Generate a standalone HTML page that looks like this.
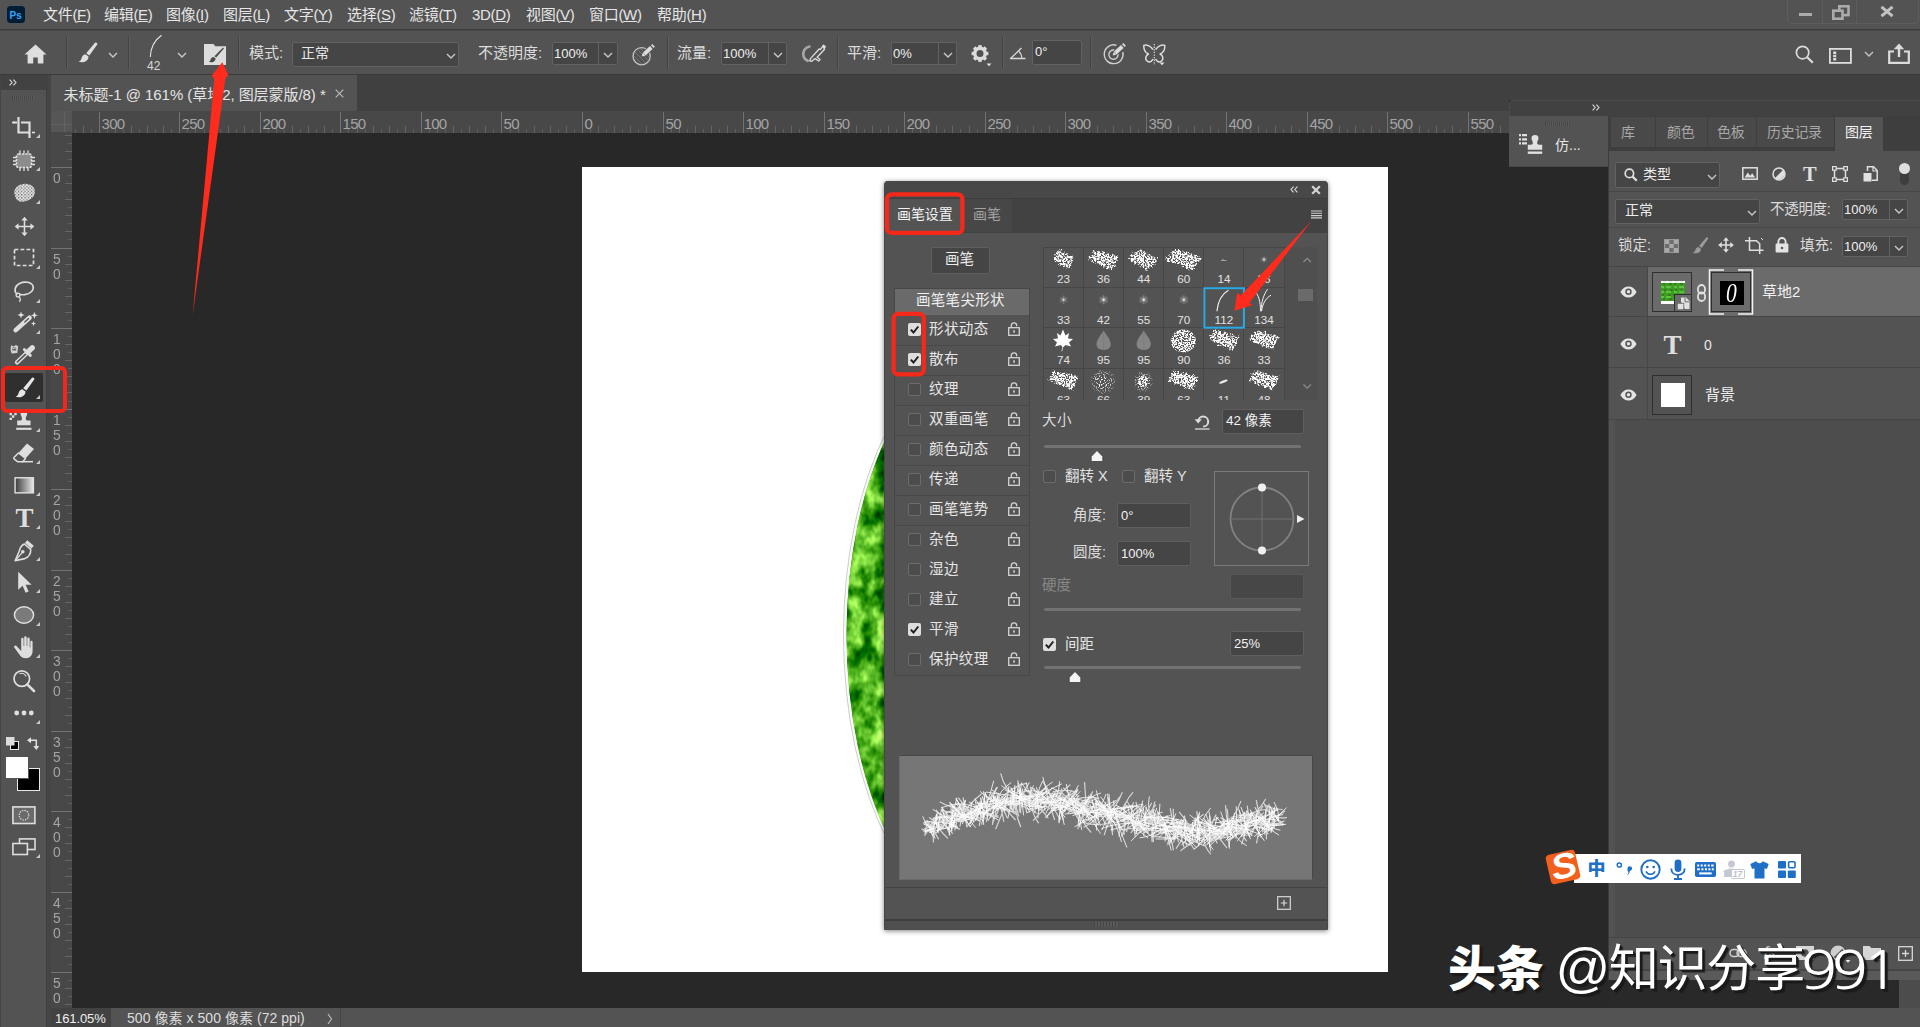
<!DOCTYPE html>
<html lang="zh-CN">
<head>
<meta charset="utf-8">
<title>Photoshop - 画笔设置</title>
<style>
*{box-sizing:border-box;margin:0;padding:0}
html,body{width:1920px;height:1027px;overflow:hidden;background:#282828}
body{font-family:"Liberation Sans","Noto Sans CJK SC",sans-serif;color:#dcdcdc;font-size:14px;position:relative}
.abs{position:absolute}
#app{position:absolute;left:0;top:0;width:1920px;height:1027px;overflow:hidden;background:#282828}
.t{position:absolute;white-space:nowrap;line-height:1}
svg{position:absolute;overflow:visible}
/* menu */
#menubar{left:0;top:0;width:1920px;height:30px;background:#535353;border-bottom:1px solid #3c3c3c}
#menubar .t{top:7px;font-size:15px;color:#e6e6e6;letter-spacing:-0.3px}
/* options bar */
#optbar{left:0;top:30px;width:1920px;height:45px;background:#535353;border-bottom:1px solid #3a3a3a;border-top:1px solid #474747}
.inp{position:absolute;background:#454545;border:1px solid #626262;border-radius:2px}
.lbl{font-size:14px;color:#dcdcdc}
.sep{width:2px;height:32px;background:linear-gradient(90deg,#434343 0 1px,#5f5f5f 1px 2px)}
.ptab{top:117px;height:30px;background:#494949}
.ptx{top:125px;font-size:14px;color:#a8a8a8;letter-spacing:-0.3px}
.hsep{left:1609px;width:311px;height:1px;background:#474747}
/* tab bar */
#tabbar{left:51px;top:75px;width:1458px;height:36px;background:#404040}
#doctab{left:0;top:0;width:306px;height:36px;background:#535353}
/* toolbar */
#toolbar{left:0;top:75px;width:51px;height:952px;background:#535353;border-right:1px solid #3e3e3e}
#tbhead{left:0;top:0;width:50px;height:15px;background:#424242}
/* rulers */
#hruler{left:51px;top:111px;width:1458px;height:22px;background:#484848;overflow:hidden}
#vruler{left:51px;top:133px;width:21px;height:875px;background:#484848;overflow:hidden}
.rl{position:absolute;font-size:15px;color:#a4a4a4;line-height:1;letter-spacing:-0.7px}
/* canvas */
#canvas{left:72px;top:133px;width:1537px;height:875px;background:#282828}
#doc{left:582px;top:167px;width:806px;height:805px;background:#fff;overflow:hidden}
/* status */
#status{left:51px;top:1008px;width:1869px;height:19px;background:#535353}
</style>
</head>
<body>
<div id="app">
<!-- MENU BAR -->
<div id="menubar" class="abs">
  <svg style="left:7px;top:6px" width="18" height="17" viewBox="0 0 18 17"><rect width="18" height="17" rx="3.5" fill="#001e36"/><text x="2.6" y="12.6" font-family="Liberation Sans, sans-serif" font-weight="bold" font-size="10" fill="#31a8ff">Ps</text></svg>
  <span class="t" style="left:43px">文件(<u>F</u>)</span>
  <span class="t" style="left:104px">编辑(<u>E</u>)</span>
  <span class="t" style="left:166px">图像(<u>I</u>)</span>
  <span class="t" style="left:223px">图层(<u>L</u>)</span>
  <span class="t" style="left:284px">文字(<u>Y</u>)</span>
  <span class="t" style="left:347px">选择(<u>S</u>)</span>
  <span class="t" style="left:409px">滤镜(<u>T</u>)</span>
  <span class="t" style="left:472px">3D(<u>D</u>)</span>
  <span class="t" style="left:526px">视图(<u>V</u>)</span>
  <span class="t" style="left:589px">窗口(<u>W</u>)</span>
  <span class="t" style="left:657px">帮助(<u>H</u>)</span>
  <!-- window controls -->
  <div class="abs" style="left:1787px;top:-4px;width:132px;height:28px;border:1px solid #5d5d5d;border-radius:5px"></div>
  <div class="abs" style="left:1822px;top:0;width:1px;height:23px;background:#5d5d5d"></div>
  <div class="abs" style="left:1856px;top:0;width:1px;height:23px;background:#5d5d5d"></div>
  <div class="abs" style="left:1799px;top:13px;width:13px;height:3px;background:#ababab"></div>
  <svg style="left:1832px;top:5px" width="18" height="15" viewBox="0 0 18 15"><rect x="7.300" y="1.300" width="9.200" height="8.800" fill="none" stroke="#ababab" stroke-width="2.600"/><rect x="1.300" y="5.700" width="9.200" height="8" fill="#535353" stroke="#ababab" stroke-width="2.600"/></svg>
  <svg style="left:1880px;top:6px" width="14" height="11" viewBox="0 0 14 11"><path d="M1.5 0.8L12.5 10.2M12.5 0.8L1.5 10.2" stroke="#c2c2c2" stroke-width="3"/></svg>
</div>
<!-- OPTIONS BAR -->
<div id="optbar" class="abs">
  <!-- coordinates inside are relative to top:30 (content starts 1px lower due to border) -->
  <div class="abs" style="left:0;top:-1px;width:1920px;height:45px">
  <!-- home -->
  <svg style="left:24px;top:14px" width="23" height="20" viewBox="0 0 23 20"><path d="M11.5 0.5L0.5 10.5H3.6V19.5H9.2V13.4H13.8V19.5H19.4V10.5H22.5Z" fill="#dedede"/></svg>
  <div class="abs sep" style="left:66px;top:7px"></div>
  <!-- brush tool -->
  <svg style="left:78px;top:12px" width="20" height="21" viewBox="0 0 20 21"><path d="M17.2 0.6c1.2-.6 2.6.6 2 1.9L11.4 13.6 8.2 11.2Z" fill="#dedede"/><path d="M7.3 12.2l3.2 2.4c.2 2.6-1.4 4.6-4.2 5.3-2 .5-4.3.3-5.8-.4 2.1-.5 2.6-1.600 3.100-3.400.5-2 1.800-3.500 3.700-3.900z" fill="#dedede"/></svg>
  <svg style="left:108px;top:22px" width="10" height="6" viewBox="0 0 10 6"><path d="M1 1l4 4 4-4" fill="none" stroke="#c8c8c8" stroke-width="1.4"/></svg>
  <div class="abs sep" style="left:128px;top:7px"></div>
  <!-- brush preview arc + size -->
  <svg style="left:148px;top:4px" width="16" height="24" viewBox="0 0 16 24"><path d="M2.300 23C2.600 14 6 6.500 13.500 1.200" fill="none" stroke="#e8e8e8" stroke-width="1.100"/></svg>
  <span class="t" style="left:147px;top:30px;font-size:12px;color:#d8d8d8">42</span>
  <svg style="left:177px;top:22px" width="10" height="6" viewBox="0 0 10 6"><path d="M1 1l4 4 4-4" fill="none" stroke="#c8c8c8" stroke-width="1.4"/></svg>
  <!-- brush settings folder -->
  <svg style="left:204px;top:14px" width="22" height="21" viewBox="0 0 22 21"><path d="M0 0H9.500L11.300 2.300H22V21H0Z" fill="#dcdcdc"/><path d="M18.800 3.800c.7-.3 1.300.4.900 1L12.200 13.600l-1.800-1.400Z" fill="#4a4a4a"/><path d="M9.600 12.900l2 1.500c0 2.100-1.600 3.500-3.800 3.800-1.200.1-2.400-.1-3.200-.6 1.300-.3 1.700-1 2-2.200.4-1.400 1.400-2.400 3-2.500z" fill="#4a4a4a"/></svg>
  <div class="abs sep" style="left:238px;top:7px"></div>
  <!-- mode -->
  <span class="t lbl" style="left:249px;top:15px;font-size:15px">模式:</span>
  <div class="inp" style="left:292px;top:12px;width:167px;height:25px"></div>
  <span class="t" style="left:301px;top:16px;font-size:14px;color:#e8e8e8">正常</span>
  <svg style="left:446px;top:23px" width="10" height="6" viewBox="0 0 10 6"><path d="M1 1l4 4 4-4" fill="none" stroke="#c8c8c8" stroke-width="1.400"/></svg>
  <!-- opacity -->
  <span class="t lbl" style="left:478px;top:15px;font-size:15px">不透明度:</span>
  <div class="inp" style="left:552px;top:12px;width:66px;height:23px"></div>
  <div class="abs" style="left:598px;top:13px;width:1px;height:21px;background:#626262"></div>
  <span class="t" style="left:554px;top:17px;font-size:13px;color:#f0f0f0">100%</span>
  <svg style="left:603px;top:22px" width="10" height="6" viewBox="0 0 10 6"><path d="M1 1l4 4 4-4" fill="none" stroke="#c8c8c8" stroke-width="1.400"/></svg>
  <!-- pressure opacity -->
  <svg style="left:632px;top:13px" width="24" height="23" viewBox="0 0 24 23"><circle cx="9.600" cy="13.200" r="8.600" fill="none" stroke="#c4c4c4" stroke-width="1.300"/><path d="M3 9l10 10M2 13l8 8M5 6l12 12M8 5l10 10" stroke="#8a8a8a" stroke-width=".6"/><path d="M9.600 13.600l1.300-4 2.900 2.800z" fill="#dcdcdc"/><path d="M12.300 11L19.300 4.500" stroke="#535353" stroke-width="5.400"/><path d="M12.300 11L19.300 4.500" stroke="#dcdcdc" stroke-width="3.800"/><path d="M20.300 3.600L21.600 2.400" stroke="#dcdcdc" stroke-width="3.800"/></svg>
  <div class="abs sep" style="left:667px;top:7px"></div>
  <!-- flow -->
  <span class="t lbl" style="left:677px;top:15px;font-size:15px">流量:</span>
  <div class="inp" style="left:721px;top:12px;width:66px;height:23px"></div>
  <div class="abs" style="left:768px;top:13px;width:1px;height:21px;background:#626262"></div>
  <span class="t" style="left:723px;top:17px;font-size:13px;color:#f0f0f0">100%</span>
  <svg style="left:773px;top:22px" width="10" height="6" viewBox="0 0 10 6"><path d="M1 1l4 4 4-4" fill="none" stroke="#c8c8c8" stroke-width="1.400"/></svg>
  <!-- airbrush -->
  <svg style="left:801px;top:14px" width="26" height="19" viewBox="0 0 26 19"><path d="M8.500 2.500C3.500 3.500 1.500 8 2.500 12c.6 2.400 2.200 4 4.200 4.800" fill="none" stroke="#a8a8a8" stroke-width="2.600" stroke-linecap="round"/><path d="M22.500 1.200l1.800 1.600-1.300 1.500.6 1-7.500 8 3 2.200-1.400 1.500-3.600-2.400-3.600 2.800-1.700-.6.700-2.200 8.600-9.600 1.500.3z" fill="none" stroke="#dcdcdc" stroke-width="1.300" stroke-linejoin="round"/><path d="M22.400 1l2 1.800-1.500 1.600-2-1.800z" fill="#dcdcdc"/></svg>
  <div class="abs sep" style="left:837px;top:7px"></div>
  <!-- smoothing -->
  <span class="t lbl" style="left:847px;top:15px;font-size:15px">平滑:</span>
  <div class="inp" style="left:891px;top:12px;width:66px;height:23px"></div>
  <div class="abs" style="left:938px;top:13px;width:1px;height:21px;background:#626262"></div>
  <span class="t" style="left:893px;top:17px;font-size:13px;color:#f0f0f0">0%</span>
  <svg style="left:943px;top:22px" width="10" height="6" viewBox="0 0 10 6"><path d="M1 1l4 4 4-4" fill="none" stroke="#c8c8c8" stroke-width="1.400"/></svg>
  <!-- gear -->
  <svg style="left:971px;top:15px" width="22" height="22" viewBox="0 0 22 22"><g transform="translate(9 8.500)"><circle r="5.200" fill="none" stroke="#dcdcdc" stroke-width="3.400"/><g fill="#dcdcdc"><rect x="-1.700" y="-8.400" width="3.400" height="3.200"/><rect x="-1.700" y="5.200" width="3.400" height="3.200"/><rect x="-8.400" y="-1.700" width="3.200" height="3.400"/><rect x="5.200" y="-1.700" width="3.200" height="3.400"/><g transform="rotate(45)"><rect x="-1.700" y="-8.400" width="3.400" height="3.200"/><rect x="-1.700" y="5.200" width="3.400" height="3.200"/><rect x="-8.400" y="-1.700" width="3.200" height="3.400"/><rect x="5.200" y="-1.700" width="3.200" height="3.400"/></g></g></g><path d="M15.500 18.500h5l-2.500 2.800z" fill="#e0e0e0"/></svg>
  <div class="abs sep" style="left:1002px;top:7px"></div>
  <!-- angle -->
  <svg style="left:1009px;top:17px" width="17" height="13" viewBox="0 0 17 13"><path d="M12.500 1L1.500 11.500H16.500" fill="none" stroke="#d8d8d8" stroke-width="1.300" stroke-linejoin="round"/><path d="M10 4.500c1.800 1.600 2.800 4 2.800 7" fill="none" stroke="#d8d8d8" stroke-width="1.100"/></svg>
  <div class="inp" style="left:1032px;top:10px;width:50px;height:25px"></div>
  <span class="t" style="left:1035px;top:15px;font-size:13px;color:#f0f0f0">0°</span>
  <div class="abs sep" style="left:1090px;top:7px"></div>
  <!-- pressure size -->
  <svg style="left:1103px;top:12px" width="24" height="23" viewBox="0 0 24 23"><path d="M13.500 3.300A9.400 9.400 0 1 0 19.800 10" fill="none" stroke="#d0d0d0" stroke-width="1.400"/><path d="M11.500 8.200A4.600 4.600 0 1 0 15 12" fill="none" stroke="#d0d0d0" stroke-width="1.400"/><path d="M9.600 13.600l1.300-4 2.900 2.800z" fill="#dcdcdc"/><path d="M12.300 11L19.300 4.500" stroke="#535353" stroke-width="5.400"/><path d="M12.300 11L19.300 4.500" stroke="#dcdcdc" stroke-width="3.800"/><path d="M20.300 3.600L21.600 2.400" stroke="#dcdcdc" stroke-width="3.800"/></svg>
  <!-- symmetry butterfly -->
  <svg style="left:1142px;top:13px" width="25" height="24" viewBox="0 0 25 24"><path d="M11 6.500C8.500 3 4.500 1.200 1.800 2.400 1.500 6.500 3.500 9.800 6.500 11c-2.600 1.200-3.300 4-2.200 6.200 1.400 2.600 5 2.400 6.700-1.200" fill="none" stroke="#dcdcdc" stroke-width="1.500" stroke-linejoin="round"/><path d="M13.600 6.500C16.100 3 20.100 1.200 22.800 2.400 23.100 6.500 21.100 9.800 18.100 11c2.600 1.200 3.300 4 2.200 6.200-1.400 2.600-5 2.400-6.700-1.200" fill="none" stroke="#dcdcdc" stroke-width="1.500" stroke-linejoin="round"/><path d="M12.300 1v21" stroke="#dcdcdc" stroke-width="1.200" stroke-dasharray="1.300 1.300"/><path d="M17.500 19.500h5l-2.500 2.800z" fill="#e0e0e0"/></svg>
  <!-- right: search / workspace / share -->
  <svg style="left:1795px;top:15px" width="19" height="19" viewBox="0 0 19 19"><circle cx="7.600" cy="7.600" r="6.200" fill="none" stroke="#dcdcdc" stroke-width="1.700"/><path d="M12.200 12.200l5.600 5.600" stroke="#dcdcdc" stroke-width="2.200"/></svg>
  <svg style="left:1829px;top:18px" width="23" height="16" viewBox="0 0 23 16"><rect x=".9" y=".9" width="21" height="14" fill="none" stroke="#dcdcdc" stroke-width="1.800"/><rect x="4.200" y="3.500" width="3" height="9" fill="#dcdcdc"/><path d="M4 6.500h3.500M4 9.500h3.500" stroke="#535353" stroke-width=".8"/></svg>
  <svg style="left:1864px;top:21px" width="10" height="6" viewBox="0 0 10 6"><path d="M1 1l4 4 4-4" fill="none" stroke="#c8c8c8" stroke-width="1.300"/></svg>
  <svg style="left:1888px;top:13px" width="22" height="21" viewBox="0 0 22 21"><path d="M6 8.500H1.200V19.800H20.800V8.500H16" fill="none" stroke="#dcdcdc" stroke-width="2.200"/><path d="M11 14V3" stroke="#dcdcdc" stroke-width="2.400"/><path d="M5.800 6.200L11 .6l5.200 5.600z" fill="#dcdcdc"/></svg>
  </div>
</div>
<!-- DOCUMENT TAB BAR -->
<div id="tabbar" class="abs">
  <div id="doctab" class="abs"></div>
  <span class="t" style="left:12.500px;top:11.800px;font-size:15px;color:#e4e4e4;letter-spacing:-0.050px">未标题-1 @ 161% (草地2, 图层蒙版/8) *</span>
  <svg style="left:284px;top:14px" width="9" height="9" viewBox="0 0 9 9"><path d="M.7.7l7.600 7.600M8.300.7L.7 8.300" stroke="#bdbdbd" stroke-width="1.100"/></svg>
</div>
<!-- CANVAS -->
<div id="canvas" class="abs"></div>
<div id="doc" class="abs">
  <svg style="left:0;top:0" width="806" height="805" viewBox="0 0 806 805">
    <defs>
      <filter id="grassfx" x="0" y="0" width="100%" height="100%" color-interpolation-filters="sRGB">
        <feTurbulence type="fractalNoise" baseFrequency="0.075 0.05" numOctaves="3" seed="11" result="n"/>
        <feColorMatrix in="n" type="matrix" values="1.500 0 0 0 -0.440  1.300 0 0 0 0.040  1.000 0 0 0 -0.380  0 0 0 0 1" result="c"/>
        <feComposite in="c" in2="SourceGraphic" operator="in"/>
      </filter>
      <clipPath id="grassclip"><rect x="250" y="240" width="60" height="450"/></clipPath>
    </defs>
    <g clip-path="url(#grassclip)">
    <ellipse cx="412" cy="468" rx="147.500" ry="289" fill="#3f9c22"/>
    <ellipse cx="412" cy="468" rx="147.500" ry="289" fill="#3f9c22" filter="url(#grassfx)"/>
    <ellipse cx="412" cy="468" rx="150.500" ry="291" fill="none" stroke="#b4b4b4" stroke-width=".7"/>
    </g>
  </svg>
</div>
<!-- STATUS BAR -->
<div id="status" class="abs">
  <div class="abs" style="left:0;top:0;width:60px;height:19px;background:#424242"></div>
  <span class="t" style="left:4px;top:3.500px;font-size:13px;color:#efefef;letter-spacing:-0.100px">161.05%</span>
  <span class="t" style="left:76px;top:3px;font-size:14px;color:#dcdcdc;letter-spacing:0.05px">500 像素 x 500 像素 (72 ppi)</span>
  <svg style="left:276px;top:5px" width="6" height="12" viewBox="0 0 6 12"><path d="M1 1l3.500 5L1 11" fill="none" stroke="#c0c0c0" stroke-width="1.100"/></svg>
  <div class="abs" style="left:289px;top:0;width:1px;height:20px;background:#474747"></div>
</div>
<!-- RULERS -->
<div id="hruler" class="abs">
<div class="abs" style="left:0;top:0;width:21px;height:21px;background:#565656"></div>
<div class="abs" style="left:13px;top:0;width:1px;height:21px;background:#6a6a6a;opacity:.6"></div><div class="abs" style="left:0;top:13px;width:21px;height:1px;background:#6a6a6a;opacity:.6"></div>
<svg style="left:0;top:0" width="1458" height="22" viewBox="0 0 1458 22" shape-rendering="crispEdges"><rect x="24" y="18" width="1" height="4" fill="#5e5e5e"/><rect x="32" y="15" width="1" height="7" fill="#646464"/><rect x="40" y="18" width="1" height="4" fill="#5e5e5e"/><rect x="48" y="1" width="1" height="21" fill="#727272"/><rect x="56" y="18" width="1" height="4" fill="#5e5e5e"/><rect x="64" y="15" width="1" height="7" fill="#646464"/><rect x="72" y="18" width="1" height="4" fill="#5e5e5e"/><rect x="80" y="15" width="1" height="7" fill="#646464"/><rect x="88" y="18" width="1" height="4" fill="#5e5e5e"/><rect x="96" y="15" width="1" height="7" fill="#646464"/><rect x="104" y="18" width="1" height="4" fill="#5e5e5e"/><rect x="112" y="15" width="1" height="7" fill="#646464"/><rect x="120" y="18" width="1" height="4" fill="#5e5e5e"/><rect x="128" y="1" width="1" height="21" fill="#727272"/><rect x="136" y="18" width="1" height="4" fill="#5e5e5e"/><rect x="144" y="15" width="1" height="7" fill="#646464"/><rect x="153" y="18" width="1" height="4" fill="#5e5e5e"/><rect x="161" y="15" width="1" height="7" fill="#646464"/><rect x="169" y="18" width="1" height="4" fill="#5e5e5e"/><rect x="177" y="15" width="1" height="7" fill="#646464"/><rect x="185" y="18" width="1" height="4" fill="#5e5e5e"/><rect x="193" y="15" width="1" height="7" fill="#646464"/><rect x="201" y="18" width="1" height="4" fill="#5e5e5e"/><rect x="209" y="1" width="1" height="21" fill="#727272"/><rect x="217" y="18" width="1" height="4" fill="#5e5e5e"/><rect x="225" y="15" width="1" height="7" fill="#646464"/><rect x="233" y="18" width="1" height="4" fill="#5e5e5e"/><rect x="241" y="15" width="1" height="7" fill="#646464"/><rect x="249" y="18" width="1" height="4" fill="#5e5e5e"/><rect x="257" y="15" width="1" height="7" fill="#646464"/><rect x="265" y="18" width="1" height="4" fill="#5e5e5e"/><rect x="273" y="15" width="1" height="7" fill="#646464"/><rect x="281" y="18" width="1" height="4" fill="#5e5e5e"/><rect x="289" y="1" width="1" height="21" fill="#727272"/><rect x="297" y="18" width="1" height="4" fill="#5e5e5e"/><rect x="306" y="15" width="1" height="7" fill="#646464"/><rect x="314" y="18" width="1" height="4" fill="#5e5e5e"/><rect x="322" y="15" width="1" height="7" fill="#646464"/><rect x="330" y="18" width="1" height="4" fill="#5e5e5e"/><rect x="338" y="15" width="1" height="7" fill="#646464"/><rect x="346" y="18" width="1" height="4" fill="#5e5e5e"/><rect x="354" y="15" width="1" height="7" fill="#646464"/><rect x="362" y="18" width="1" height="4" fill="#5e5e5e"/><rect x="370" y="1" width="1" height="21" fill="#727272"/><rect x="378" y="18" width="1" height="4" fill="#5e5e5e"/><rect x="386" y="15" width="1" height="7" fill="#646464"/><rect x="394" y="18" width="1" height="4" fill="#5e5e5e"/><rect x="402" y="15" width="1" height="7" fill="#646464"/><rect x="410" y="18" width="1" height="4" fill="#5e5e5e"/><rect x="418" y="15" width="1" height="7" fill="#646464"/><rect x="426" y="18" width="1" height="4" fill="#5e5e5e"/><rect x="434" y="15" width="1" height="7" fill="#646464"/><rect x="442" y="18" width="1" height="4" fill="#5e5e5e"/><rect x="450" y="1" width="1" height="21" fill="#727272"/><rect x="459" y="18" width="1" height="4" fill="#5e5e5e"/><rect x="467" y="15" width="1" height="7" fill="#646464"/><rect x="475" y="18" width="1" height="4" fill="#5e5e5e"/><rect x="483" y="15" width="1" height="7" fill="#646464"/><rect x="491" y="18" width="1" height="4" fill="#5e5e5e"/><rect x="499" y="15" width="1" height="7" fill="#646464"/><rect x="507" y="18" width="1" height="4" fill="#5e5e5e"/><rect x="515" y="15" width="1" height="7" fill="#646464"/><rect x="523" y="18" width="1" height="4" fill="#5e5e5e"/><rect x="531" y="1" width="1" height="21" fill="#727272"/><rect x="539" y="18" width="1" height="4" fill="#5e5e5e"/><rect x="547" y="15" width="1" height="7" fill="#646464"/><rect x="555" y="18" width="1" height="4" fill="#5e5e5e"/><rect x="563" y="15" width="1" height="7" fill="#646464"/><rect x="571" y="18" width="1" height="4" fill="#5e5e5e"/><rect x="579" y="15" width="1" height="7" fill="#646464"/><rect x="587" y="18" width="1" height="4" fill="#5e5e5e"/><rect x="595" y="15" width="1" height="7" fill="#646464"/><rect x="603" y="18" width="1" height="4" fill="#5e5e5e"/><rect x="612" y="1" width="1" height="21" fill="#727272"/><rect x="620" y="18" width="1" height="4" fill="#5e5e5e"/><rect x="628" y="15" width="1" height="7" fill="#646464"/><rect x="636" y="18" width="1" height="4" fill="#5e5e5e"/><rect x="644" y="15" width="1" height="7" fill="#646464"/><rect x="652" y="18" width="1" height="4" fill="#5e5e5e"/><rect x="660" y="15" width="1" height="7" fill="#646464"/><rect x="668" y="18" width="1" height="4" fill="#5e5e5e"/><rect x="676" y="15" width="1" height="7" fill="#646464"/><rect x="684" y="18" width="1" height="4" fill="#5e5e5e"/><rect x="692" y="1" width="1" height="21" fill="#727272"/><rect x="700" y="18" width="1" height="4" fill="#5e5e5e"/><rect x="708" y="15" width="1" height="7" fill="#646464"/><rect x="716" y="18" width="1" height="4" fill="#5e5e5e"/><rect x="724" y="15" width="1" height="7" fill="#646464"/><rect x="732" y="18" width="1" height="4" fill="#5e5e5e"/><rect x="740" y="15" width="1" height="7" fill="#646464"/><rect x="748" y="18" width="1" height="4" fill="#5e5e5e"/><rect x="756" y="15" width="1" height="7" fill="#646464"/><rect x="765" y="18" width="1" height="4" fill="#5e5e5e"/><rect x="773" y="1" width="1" height="21" fill="#727272"/><rect x="781" y="18" width="1" height="4" fill="#5e5e5e"/><rect x="789" y="15" width="1" height="7" fill="#646464"/><rect x="797" y="18" width="1" height="4" fill="#5e5e5e"/><rect x="805" y="15" width="1" height="7" fill="#646464"/><rect x="813" y="18" width="1" height="4" fill="#5e5e5e"/><rect x="821" y="15" width="1" height="7" fill="#646464"/><rect x="829" y="18" width="1" height="4" fill="#5e5e5e"/><rect x="837" y="15" width="1" height="7" fill="#646464"/><rect x="845" y="18" width="1" height="4" fill="#5e5e5e"/><rect x="853" y="1" width="1" height="21" fill="#727272"/><rect x="861" y="18" width="1" height="4" fill="#5e5e5e"/><rect x="869" y="15" width="1" height="7" fill="#646464"/><rect x="877" y="18" width="1" height="4" fill="#5e5e5e"/><rect x="885" y="15" width="1" height="7" fill="#646464"/><rect x="893" y="18" width="1" height="4" fill="#5e5e5e"/><rect x="901" y="15" width="1" height="7" fill="#646464"/><rect x="909" y="18" width="1" height="4" fill="#5e5e5e"/><rect x="918" y="15" width="1" height="7" fill="#646464"/><rect x="926" y="18" width="1" height="4" fill="#5e5e5e"/><rect x="934" y="1" width="1" height="21" fill="#727272"/><rect x="942" y="18" width="1" height="4" fill="#5e5e5e"/><rect x="950" y="15" width="1" height="7" fill="#646464"/><rect x="958" y="18" width="1" height="4" fill="#5e5e5e"/><rect x="966" y="15" width="1" height="7" fill="#646464"/><rect x="974" y="18" width="1" height="4" fill="#5e5e5e"/><rect x="982" y="15" width="1" height="7" fill="#646464"/><rect x="990" y="18" width="1" height="4" fill="#5e5e5e"/><rect x="998" y="15" width="1" height="7" fill="#646464"/><rect x="1006" y="18" width="1" height="4" fill="#5e5e5e"/><rect x="1014" y="1" width="1" height="21" fill="#727272"/><rect x="1022" y="18" width="1" height="4" fill="#5e5e5e"/><rect x="1030" y="15" width="1" height="7" fill="#646464"/><rect x="1038" y="18" width="1" height="4" fill="#5e5e5e"/><rect x="1046" y="15" width="1" height="7" fill="#646464"/><rect x="1054" y="18" width="1" height="4" fill="#5e5e5e"/><rect x="1062" y="15" width="1" height="7" fill="#646464"/><rect x="1071" y="18" width="1" height="4" fill="#5e5e5e"/><rect x="1079" y="15" width="1" height="7" fill="#646464"/><rect x="1087" y="18" width="1" height="4" fill="#5e5e5e"/><rect x="1095" y="1" width="1" height="21" fill="#727272"/><rect x="1103" y="18" width="1" height="4" fill="#5e5e5e"/><rect x="1111" y="15" width="1" height="7" fill="#646464"/><rect x="1119" y="18" width="1" height="4" fill="#5e5e5e"/><rect x="1127" y="15" width="1" height="7" fill="#646464"/><rect x="1135" y="18" width="1" height="4" fill="#5e5e5e"/><rect x="1143" y="15" width="1" height="7" fill="#646464"/><rect x="1151" y="18" width="1" height="4" fill="#5e5e5e"/><rect x="1159" y="15" width="1" height="7" fill="#646464"/><rect x="1167" y="18" width="1" height="4" fill="#5e5e5e"/><rect x="1175" y="1" width="1" height="21" fill="#727272"/><rect x="1183" y="18" width="1" height="4" fill="#5e5e5e"/><rect x="1191" y="15" width="1" height="7" fill="#646464"/><rect x="1199" y="18" width="1" height="4" fill="#5e5e5e"/><rect x="1207" y="15" width="1" height="7" fill="#646464"/><rect x="1215" y="18" width="1" height="4" fill="#5e5e5e"/><rect x="1224" y="15" width="1" height="7" fill="#646464"/><rect x="1232" y="18" width="1" height="4" fill="#5e5e5e"/><rect x="1240" y="15" width="1" height="7" fill="#646464"/><rect x="1248" y="18" width="1" height="4" fill="#5e5e5e"/><rect x="1256" y="1" width="1" height="21" fill="#727272"/><rect x="1264" y="18" width="1" height="4" fill="#5e5e5e"/><rect x="1272" y="15" width="1" height="7" fill="#646464"/><rect x="1280" y="18" width="1" height="4" fill="#5e5e5e"/><rect x="1288" y="15" width="1" height="7" fill="#646464"/><rect x="1296" y="18" width="1" height="4" fill="#5e5e5e"/><rect x="1304" y="15" width="1" height="7" fill="#646464"/><rect x="1312" y="18" width="1" height="4" fill="#5e5e5e"/><rect x="1320" y="15" width="1" height="7" fill="#646464"/><rect x="1328" y="18" width="1" height="4" fill="#5e5e5e"/><rect x="1336" y="1" width="1" height="21" fill="#727272"/><rect x="1344" y="18" width="1" height="4" fill="#5e5e5e"/><rect x="1352" y="15" width="1" height="7" fill="#646464"/><rect x="1360" y="18" width="1" height="4" fill="#5e5e5e"/><rect x="1368" y="15" width="1" height="7" fill="#646464"/><rect x="1377" y="18" width="1" height="4" fill="#5e5e5e"/><rect x="1385" y="15" width="1" height="7" fill="#646464"/><rect x="1393" y="18" width="1" height="4" fill="#5e5e5e"/><rect x="1401" y="15" width="1" height="7" fill="#646464"/><rect x="1409" y="18" width="1" height="4" fill="#5e5e5e"/><rect x="1417" y="1" width="1" height="21" fill="#727272"/><rect x="1425" y="18" width="1" height="4" fill="#5e5e5e"/><rect x="1433" y="15" width="1" height="7" fill="#646464"/><rect x="1441" y="18" width="1" height="4" fill="#5e5e5e"/><rect x="1449" y="15" width="1" height="7" fill="#646464"/></svg>
<span class="rl" style="left:50.5px;top:5px">300</span>
<span class="rl" style="left:130.5px;top:5px">250</span>
<span class="rl" style="left:211.5px;top:5px">200</span>
<span class="rl" style="left:291.5px;top:5px">150</span>
<span class="rl" style="left:372.5px;top:5px">100</span>
<span class="rl" style="left:452.5px;top:5px">50</span>
<span class="rl" style="left:533.5px;top:5px">0</span>
<span class="rl" style="left:614.5px;top:5px">50</span>
<span class="rl" style="left:694.5px;top:5px">100</span>
<span class="rl" style="left:775.5px;top:5px">150</span>
<span class="rl" style="left:855.5px;top:5px">200</span>
<span class="rl" style="left:936.5px;top:5px">250</span>
<span class="rl" style="left:1016.5px;top:5px">300</span>
<span class="rl" style="left:1097.5px;top:5px">350</span>
<span class="rl" style="left:1177.5px;top:5px">400</span>
<span class="rl" style="left:1258.5px;top:5px">450</span>
<span class="rl" style="left:1338.5px;top:5px">500</span>
<span class="rl" style="left:1419.5px;top:5px">550</span>
</div>
<div id="vruler" class="abs">
<svg style="left:0;top:0" width="21" height="874" viewBox="0 0 21 874" shape-rendering="crispEdges"><rect x="14" y="2" width="7" height="1" fill="#646464"/><rect x="17" y="10" width="4" height="1" fill="#5e5e5e"/><rect x="14" y="18" width="7" height="1" fill="#646464"/><rect x="17" y="26" width="4" height="1" fill="#5e5e5e"/><rect x="0" y="34" width="21" height="1" fill="#727272"/><rect x="17" y="42" width="4" height="1" fill="#5e5e5e"/><rect x="14" y="50" width="7" height="1" fill="#646464"/><rect x="17" y="58" width="4" height="1" fill="#5e5e5e"/><rect x="14" y="66" width="7" height="1" fill="#646464"/><rect x="17" y="74" width="4" height="1" fill="#5e5e5e"/><rect x="14" y="82" width="7" height="1" fill="#646464"/><rect x="17" y="90" width="4" height="1" fill="#5e5e5e"/><rect x="14" y="98" width="7" height="1" fill="#646464"/><rect x="17" y="106" width="4" height="1" fill="#5e5e5e"/><rect x="0" y="115" width="21" height="1" fill="#727272"/><rect x="17" y="123" width="4" height="1" fill="#5e5e5e"/><rect x="14" y="131" width="7" height="1" fill="#646464"/><rect x="17" y="139" width="4" height="1" fill="#5e5e5e"/><rect x="14" y="147" width="7" height="1" fill="#646464"/><rect x="17" y="155" width="4" height="1" fill="#5e5e5e"/><rect x="14" y="163" width="7" height="1" fill="#646464"/><rect x="17" y="171" width="4" height="1" fill="#5e5e5e"/><rect x="14" y="179" width="7" height="1" fill="#646464"/><rect x="17" y="187" width="4" height="1" fill="#5e5e5e"/><rect x="0" y="195" width="21" height="1" fill="#727272"/><rect x="17" y="203" width="4" height="1" fill="#5e5e5e"/><rect x="14" y="211" width="7" height="1" fill="#646464"/><rect x="17" y="219" width="4" height="1" fill="#5e5e5e"/><rect x="14" y="227" width="7" height="1" fill="#646464"/><rect x="17" y="235" width="4" height="1" fill="#5e5e5e"/><rect x="14" y="243" width="7" height="1" fill="#646464"/><rect x="17" y="251" width="4" height="1" fill="#5e5e5e"/><rect x="14" y="259" width="7" height="1" fill="#646464"/><rect x="17" y="268" width="4" height="1" fill="#5e5e5e"/><rect x="0" y="276" width="21" height="1" fill="#727272"/><rect x="17" y="284" width="4" height="1" fill="#5e5e5e"/><rect x="14" y="292" width="7" height="1" fill="#646464"/><rect x="17" y="300" width="4" height="1" fill="#5e5e5e"/><rect x="14" y="308" width="7" height="1" fill="#646464"/><rect x="17" y="316" width="4" height="1" fill="#5e5e5e"/><rect x="14" y="324" width="7" height="1" fill="#646464"/><rect x="17" y="332" width="4" height="1" fill="#5e5e5e"/><rect x="14" y="340" width="7" height="1" fill="#646464"/><rect x="17" y="348" width="4" height="1" fill="#5e5e5e"/><rect x="0" y="356" width="21" height="1" fill="#727272"/><rect x="17" y="364" width="4" height="1" fill="#5e5e5e"/><rect x="14" y="372" width="7" height="1" fill="#646464"/><rect x="17" y="380" width="4" height="1" fill="#5e5e5e"/><rect x="14" y="388" width="7" height="1" fill="#646464"/><rect x="17" y="396" width="4" height="1" fill="#5e5e5e"/><rect x="14" y="404" width="7" height="1" fill="#646464"/><rect x="17" y="412" width="4" height="1" fill="#5e5e5e"/><rect x="14" y="421" width="7" height="1" fill="#646464"/><rect x="17" y="429" width="4" height="1" fill="#5e5e5e"/><rect x="0" y="437" width="21" height="1" fill="#727272"/><rect x="17" y="445" width="4" height="1" fill="#5e5e5e"/><rect x="14" y="453" width="7" height="1" fill="#646464"/><rect x="17" y="461" width="4" height="1" fill="#5e5e5e"/><rect x="14" y="469" width="7" height="1" fill="#646464"/><rect x="17" y="477" width="4" height="1" fill="#5e5e5e"/><rect x="14" y="485" width="7" height="1" fill="#646464"/><rect x="17" y="493" width="4" height="1" fill="#5e5e5e"/><rect x="14" y="501" width="7" height="1" fill="#646464"/><rect x="17" y="509" width="4" height="1" fill="#5e5e5e"/><rect x="0" y="517" width="21" height="1" fill="#727272"/><rect x="17" y="525" width="4" height="1" fill="#5e5e5e"/><rect x="14" y="533" width="7" height="1" fill="#646464"/><rect x="17" y="541" width="4" height="1" fill="#5e5e5e"/><rect x="14" y="549" width="7" height="1" fill="#646464"/><rect x="17" y="557" width="4" height="1" fill="#5e5e5e"/><rect x="14" y="565" width="7" height="1" fill="#646464"/><rect x="17" y="574" width="4" height="1" fill="#5e5e5e"/><rect x="14" y="582" width="7" height="1" fill="#646464"/><rect x="17" y="590" width="4" height="1" fill="#5e5e5e"/><rect x="0" y="598" width="21" height="1" fill="#727272"/><rect x="17" y="606" width="4" height="1" fill="#5e5e5e"/><rect x="14" y="614" width="7" height="1" fill="#646464"/><rect x="17" y="622" width="4" height="1" fill="#5e5e5e"/><rect x="14" y="630" width="7" height="1" fill="#646464"/><rect x="17" y="638" width="4" height="1" fill="#5e5e5e"/><rect x="14" y="646" width="7" height="1" fill="#646464"/><rect x="17" y="654" width="4" height="1" fill="#5e5e5e"/><rect x="14" y="662" width="7" height="1" fill="#646464"/><rect x="17" y="670" width="4" height="1" fill="#5e5e5e"/><rect x="0" y="678" width="21" height="1" fill="#727272"/><rect x="17" y="686" width="4" height="1" fill="#5e5e5e"/><rect x="14" y="694" width="7" height="1" fill="#646464"/><rect x="17" y="702" width="4" height="1" fill="#5e5e5e"/><rect x="14" y="710" width="7" height="1" fill="#646464"/><rect x="17" y="718" width="4" height="1" fill="#5e5e5e"/><rect x="14" y="727" width="7" height="1" fill="#646464"/><rect x="17" y="735" width="4" height="1" fill="#5e5e5e"/><rect x="14" y="743" width="7" height="1" fill="#646464"/><rect x="17" y="751" width="4" height="1" fill="#5e5e5e"/><rect x="0" y="759" width="21" height="1" fill="#727272"/><rect x="17" y="767" width="4" height="1" fill="#5e5e5e"/><rect x="14" y="775" width="7" height="1" fill="#646464"/><rect x="17" y="783" width="4" height="1" fill="#5e5e5e"/><rect x="14" y="791" width="7" height="1" fill="#646464"/><rect x="17" y="799" width="4" height="1" fill="#5e5e5e"/><rect x="14" y="807" width="7" height="1" fill="#646464"/><rect x="17" y="815" width="4" height="1" fill="#5e5e5e"/><rect x="14" y="823" width="7" height="1" fill="#646464"/><rect x="17" y="831" width="4" height="1" fill="#5e5e5e"/><rect x="0" y="839" width="21" height="1" fill="#727272"/><rect x="17" y="847" width="4" height="1" fill="#5e5e5e"/><rect x="14" y="855" width="7" height="1" fill="#646464"/><rect x="17" y="863" width="4" height="1" fill="#5e5e5e"/><rect x="14" y="871" width="7" height="1" fill="#646464"/></svg>
<span class="rl" style="left:0.500px;top:36.5px;line-height:15px;width:9px;text-align:center;transform:scaleX(.92)">0</span>
<span class="rl" style="left:0.500px;top:117.5px;line-height:15px;width:9px;text-align:center;transform:scaleX(.92)">5<br>0</span>
<span class="rl" style="left:0.500px;top:197.5px;line-height:15px;width:9px;text-align:center;transform:scaleX(.92)">1<br>0<br>0</span>
<span class="rl" style="left:0.500px;top:278.5px;line-height:15px;width:9px;text-align:center;transform:scaleX(.92)">1<br>5<br>0</span>
<span class="rl" style="left:0.500px;top:358.5px;line-height:15px;width:9px;text-align:center;transform:scaleX(.92)">2<br>0<br>0</span>
<span class="rl" style="left:0.500px;top:439.5px;line-height:15px;width:9px;text-align:center;transform:scaleX(.92)">2<br>5<br>0</span>
<span class="rl" style="left:0.500px;top:519.5px;line-height:15px;width:9px;text-align:center;transform:scaleX(.92)">3<br>0<br>0</span>
<span class="rl" style="left:0.500px;top:600.5px;line-height:15px;width:9px;text-align:center;transform:scaleX(.92)">3<br>5<br>0</span>
<span class="rl" style="left:0.500px;top:680.5px;line-height:15px;width:9px;text-align:center;transform:scaleX(.92)">4<br>0<br>0</span>
<span class="rl" style="left:0.500px;top:761.5px;line-height:15px;width:9px;text-align:center;transform:scaleX(.92)">4<br>5<br>0</span>
<span class="rl" style="left:0.500px;top:841.5px;line-height:15px;width:9px;text-align:center;transform:scaleX(.92)">5<br>0<br>0</span>
</div>
<!-- LEFT TOOLBAR -->
<div class="abs" style="left:0;top:75px;width:51px;height:952px;background:#454545"></div>
<div id="toolbar" class="abs" style="left:1px;top:75px;width:46px;height:952px;background:#535353">
  <div id="tbhead" class="abs" style="left:0;top:0;width:47px;height:15px;background:#424242"></div>
  <svg style="left:8px;top:4px" width="8" height="7" viewBox="0 0 8 7"><path d="M.6.6L3.200 3.500.6 6.400M4.400.6L7 3.500 4.400 6.400" fill="none" stroke="#dcdcdc" stroke-width="1.100"/></svg>
  <div class="abs" style="left:11px;top:21px;width:22px;height:5px;background:repeating-linear-gradient(90deg,#474747 0 1px,#5b5b5b 1px 2px)"></div>
</div>
<div id="tools" class="abs" style="left:0;top:0;width:72px;height:1027px">
  <!-- crop -->
  <svg style="left:12px;top:116px" width="24" height="24" viewBox="0 0 24 24"><path d="M6.500 1V16.500H18M1 6.500H5M9 6.500H17.500V22" fill="none" stroke="#dedede" stroke-width="2.200"/><path d="M20 16.500h3" stroke="#dedede" stroke-width="1.600"/><path d="M0 6.500h3" stroke="#dedede" stroke-width="1.600"/></svg>
  <!-- frame/artboard chip -->
  <svg style="left:12px;top:149px" width="24" height="24" viewBox="0 0 24 24"><rect x="4.500" y="5" width="15" height="13.500" rx="2" fill="#8c8c8c" stroke="#e4e4e4" stroke-width="1.500" stroke-dasharray="2.400 1"/><path d="M8 1.500v3M12 1.500v3M16 1.500v3M8 19v3M12 19v3M16 19v3M1 8.500h3M1 12h3M1 15.500h3M20 8.500h3M20 12h3M20 15.500h3" stroke="#e4e4e4" stroke-width="1.300"/></svg>
  <!-- object select blob -->
  <svg style="left:11px;top:180.500px" width="27" height="26" viewBox="0 0 24 24"><defs><pattern id="spk" width="3" height="3" patternUnits="userSpaceOnUse"><rect width="3" height="3" fill="#e2e2e2"/><rect x="0" y="0" width="1.100" height="1.100" fill="#555"/><rect x="1.700" y="1.600" width="1" height="1" fill="#666"/></pattern></defs><path d="M3 13c-1.500-4 1-8.500 5.500-9.800 4-1.300 9.500-.8 12 2.800 2 3 1.300 7.500-1.500 9.800-3 2.600-8 4-11.500 3.200C5 18.300 3.700 16 3 13z" fill="url(#spk)"/></svg>
  <!-- move -->
  <svg style="left:13.500px;top:216px" width="21" height="21" viewBox="0 0 24 24"><path d="M12 3v18M3 12h18" stroke="#dedede" stroke-width="1.800"/><path d="M12 .8l3.600 4.400H8.400zM12 23.200l3.600-4.400H8.400zM.8 12l4.400-3.600v7.200zM23.200 12l-4.400-3.600v7.200z" fill="#dedede"/></svg>
  <!-- marquee -->
  <svg style="left:13px;top:248px" width="22" height="20" viewBox="0 0 22 20"><rect x="1.500" y="1.500" width="19" height="16" fill="none" stroke="#dedede" stroke-width="1.700" stroke-dasharray="3.800 2.200"/></svg>
  <!-- lasso -->
  <svg style="left:12px;top:280px" width="24" height="24" viewBox="0 0 24 24"><path d="M5.500 14.500C1.500 11.500 2.500 6 7.500 3.500c5-2.500 12-1.500 13.500 2.500 1.300 3.800-2.500 7.800-8 8.600-2.200.3-4.300.2-6-.2" fill="none" stroke="#dedede" stroke-width="1.600"/><circle cx="6" cy="15" r="1.900" fill="none" stroke="#dedede" stroke-width="1.300"/><path d="M6.800 16.800c1.600 1.200 2 3 .6 5" fill="none" stroke="#dedede" stroke-width="1.300"/></svg>
  <!-- magic wand -->
  <svg style="left:0;top:300px" width="51" height="80" viewBox="0 300 51 80"><path d="M15.700 330.100L29.500 317.700" stroke="#dedede" stroke-width="4.600" stroke-linecap="round"/><path d="M24.800 322L28.600 318.600" stroke="#535353" stroke-width="1.300" stroke-linecap="round"/><path d="M21 311.400l.9 2.700 2.700.9-2.700.9-.9 2.700-.9-2.700-2.700-.9 2.700-.9zM34.400 311.700l.9 2.700 2.700.9-2.700.9-.9 2.700-.9-2.700-2.700-.9 2.700-.9zM33.500 321l.7 1.900 1.900.7-1.900.7-.7 1.900-.7-1.900-1.900-.7 1.900-.7z" fill="#e4e4e4"/>
  <!-- eyedropper -->
  <path d="M17 362.300L27 352.800" stroke="#dedede" stroke-width="4.400" stroke-linecap="round"/><path d="M17.300 362L26.500 353.300" stroke="#535353" stroke-width="1.700" stroke-linecap="round"/><path d="M24.300 349.400L30.400 355.600" stroke="#dedede" stroke-width="2.800" stroke-linecap="round"/><path d="M27.600 352.200L32.200 347.900" stroke="#dedede" stroke-width="5.400" stroke-linecap="round"/>
  <path d="M11.200 345.200l2.300 1.300 2.400-1.600 2.300 1.300-.9 6.800-5.600.5c-1.200-2.600-1.400-5.400-.5-8.300z" fill="#d4d4d4"/><path d="M12.300 348.300l1.300-.8 1.300.8 1.300-.8M12.300 350.300l1.300-.8 1.300.8 1.300-.8M12.300 349.300l1.300.8 1.300-.8 1.300.8" stroke="#3c3c3c" stroke-width=".7" fill="none"/></svg>
  <!-- brush (selected) -->
  <div class="abs" style="left:5px;top:373px;width:38px;height:29px;background:#2f2f2f;border-radius:2px"></div>
  <svg style="left:15px;top:377px" width="20" height="21" viewBox="0 0 20 21"><path d="M17.200.6c1.200-.6 2.600.6 2 1.900L11.400 13.600 8.200 11.200Z" fill="#e6e6e6"/><path d="M7.300 12.200l3.200 2.400c.2 2.600-1.400 4.600-4.200 5.300-2 .5-4.300.3-5.800-.4 2.100-.5 2.600-1.600 3.100-3.400.5-2 1.800-3.500 3.700-3.900z" fill="#e6e6e6"/></svg>
  <!-- stamp -->
  <svg style="left:8px;top:412px" width="26" height="21" viewBox="0 0 26 22"><path d="M12.500 1.500c0-1 1.200-1.500 3.500-1.500s3.500.5 3.500 1.500c0 2.200-1.500 3.200-1.500 5.500 0 1.200.8 2 2.500 2h2.500v5h-14v-5h2.500c1.700 0 2.500-.8 2.500-2 0-2.300-1.500-3.300-1.500-5.500z" fill="#dedede"/><rect x="8" y="16.500" width="16" height="2.200" fill="#dedede"/><path d="M1 1h2.500v2.500H1zM3.500 3.500H6V6H3.500zM6 1h2.500v2.500H6zM1 6h2.500v2.500H1z" fill="#dedede"/></svg>
  <!-- eraser -->
  <svg style="left:12px;top:442px" width="24" height="22" viewBox="0 0 24 22"><path d="M15 1.500l7 5.500-8.500 9.500-7-5.500z" fill="#dedede"/><path d="M6.500 11l7 5.500-2.800 3.200H5.500L2.300 17.200c-.7-.6-.7-1.400-.1-2z" fill="none" stroke="#dedede" stroke-width="1.500" stroke-linejoin="round"/><path d="M10 19.700h11" stroke="#dedede" stroke-width="1.500"/></svg>
  <!-- gradient -->
  <svg style="left:14px;top:476.500px" width="20.500" height="17" viewBox="0 0 21 18"><defs><linearGradient id="gg" x1="0" x2="1" y1="0" y2="0"><stop offset="0" stop-color="#3a3a3a"/><stop offset="1" stop-color="#e8e8e8"/></linearGradient></defs><rect x=".8" y=".8" width="19.400" height="16" fill="url(#gg)" stroke="#e0e0e0" stroke-width="1.500"/></svg>
  <!-- type -->
  <span class="t" style="left:15.500px;top:504.500px;font-family:'Liberation Serif',serif;font-weight:bold;font-size:27px;color:#dedede;line-height:1">T</span>
  <!-- pen -->
  <svg style="left:12px;top:539px" width="24" height="23" viewBox="0 0 24 23"><path d="M15.200 1.200l6.600 5.600-2.300 2.700-6.600-5.600z" fill="#dedede"/><path d="M12.300 5l6.400 5.400c.2 4.200-1.800 7.600-5.800 9.200l-9.700 2 4-9.400c1-4 2.200-6 5.100-7.200z" fill="none" stroke="#dedede" stroke-width="1.600" stroke-linejoin="round"/><path d="M3.800 21l6.400-7.400" stroke="#dedede" stroke-width="1.200"/><circle cx="10.800" cy="12.800" r="1.800" fill="#dedede"/></svg>
  <!-- path select arrow -->
  <svg style="left:17px;top:571px" width="16" height="23" viewBox="0 0 16 23"><path d="M1.200.8v18l4.400-4 3 7 3-1.300-3-6.800h6z" fill="#dedede"/></svg>
  <!-- ellipse -->
  <svg style="left:13px;top:605px" width="22" height="20" viewBox="0 0 22 20"><ellipse cx="11" cy="10" rx="9.600" ry="8.200" fill="#7b7b7b" stroke="#e0e0e0" stroke-width="1.500"/></svg>
  <!-- hand -->
  <svg style="left:12px;top:636px" width="24" height="23" viewBox="0 0 24 23"><path d="M9.200 11V3.200c0-1.900 2.400-1.900 2.400 0V10h.6V1.700c0-1.900 2.500-1.900 2.500 0V10h.6V3c0-1.900 2.400-1.900 2.400 0v8.500h.6V6.200c0-1.800 2.300-1.800 2.300 0v8.300c0 4.700-2.500 7.700-6.700 7.700-3.300 0-5-1.300-6.700-3.900L2.300 11.500c-.9-1.500.9-2.800 2.200-1.600L9.200 15z" fill="#dedede"/></svg>
  <!-- zoom -->
  <svg style="left:12px;top:669px" width="24" height="24" viewBox="0 0 24 24"><circle cx="9.800" cy="9.600" r="7.800" fill="none" stroke="#dedede" stroke-width="1.700"/><path d="M15.200 15.400l6.800 6.600" stroke="#dedede" stroke-width="2.600" stroke-linecap="round"/><path d="M7.500 4.800c2.800-1.200 5.600.2 6.700 2.700" fill="none" stroke="#dedede" stroke-width="1.100"/></svg>
  <!-- more -->
  <svg style="left:13px;top:709px" width="22" height="8" viewBox="0 0 22 8"><circle cx="3.700" cy="4" r="2.400" fill="#dedede"/><circle cx="11" cy="4" r="2.400" fill="#dedede"/><circle cx="18.300" cy="4" r="2.400" fill="#dedede"/></svg>
  <!-- default colors / swap -->
  <svg style="left:6px;top:737px" width="13" height="13" viewBox="0 0 13 13"><rect x="4.500" y="4.500" width="8" height="8" fill="#000" stroke="#e8e8e8" stroke-width="1"/><rect x="0" y="0" width="8.500" height="8.500" fill="#dcdcdc"/></svg>
  <svg style="left:27px;top:737px" width="13" height="13" viewBox="0 0 13 13"><path d="M3 3.200h6.300v6.500" fill="none" stroke="#e0e0e0" stroke-width="1.500"/><path d="M0 3.200L4 .2v6zM9.300 13l-3-4h6z" fill="#e0e0e0"/></svg>
  <!-- fg/bg swatches -->
  <div class="abs" style="left:17px;top:768px;width:23px;height:23px;background:#000;border:1.500px solid #e8e8e8"></div>
  <div class="abs" style="left:5px;top:756px;width:24px;height:23px;background:#fff;border:1px solid #535353"></div>
  <!-- quick mask -->
  <svg style="left:12px;top:806px" width="24" height="19" viewBox="0 0 24 19"><rect x=".9" y=".9" width="22" height="16.600" fill="#6a6a6a" stroke="#dedede" stroke-width="1.600"/><circle cx="12" cy="9.200" r="4.800" fill="none" stroke="#f0f0f0" stroke-width="1.100" stroke-dasharray="1.300 1.200"/></svg>
  <!-- screen mode -->
  <svg style="left:12px;top:838px" width="24" height="18" viewBox="0 0 24 18"><rect x="7.500" y=".9" width="15.500" height="10.600" fill="none" stroke="#dedede" stroke-width="1.600"/><rect x=".9" y="5.500" width="14.500" height="11" fill="#535353" stroke="#dedede" stroke-width="1.600"/></svg>
  <svg style="left:0;top:0" width="51" height="1027" viewBox="0 0 51 1027"><path d="M40 134v4h-4z" fill="#c8c8c8"/><path d="M40 167v4h-4z" fill="#c8c8c8"/><path d="M40 200v4h-4z" fill="#c8c8c8"/><path d="M40 265v4h-4z" fill="#c8c8c8"/><path d="M40 299v4h-4z" fill="#c8c8c8"/><path d="M40 330v4h-4z" fill="#c8c8c8"/><path d="M40 395v4h-4z" fill="#c8c8c8"/><path d="M40 428v4h-4z" fill="#c8c8c8"/><path d="M40 460v4h-4z" fill="#c8c8c8"/><path d="M40 492v4h-4z" fill="#c8c8c8"/><path d="M40 525v4h-4z" fill="#c8c8c8"/><path d="M40 557v4h-4z" fill="#c8c8c8"/><path d="M40 589v4h-4z" fill="#c8c8c8"/><path d="M40 622v4h-4z" fill="#c8c8c8"/><path d="M40 654v4h-4z" fill="#c8c8c8"/><path d="M40 720v4h-4z" fill="#c8c8c8"/><path d="M40 854v4h-4z" fill="#c8c8c8"/></svg>
  <!-- red highlight on brush tool -->
  <div class="abs" style="left:0.500px;top:365.500px;width:66.500px;height:47px;border:4px solid #f3281a;border-radius:6px"></div>
</div>
<!-- RIGHT DOCK -->
<div id="rdock" class="abs" style="left:0;top:0;width:1920px;height:1027px">
  <!-- top gap strip under options bar at right -->
  <div class="abs" style="left:1509px;top:75px;width:411px;height:25px;background:#404040"></div>
  <!-- dock header -->
  <div class="abs" style="left:1509px;top:100px;width:411px;height:16px;background:#414141;border-top:1px solid #4b4b4b;border-left:1px solid #4b4b4b;border-top-left-radius:4px"></div>
  <svg style="left:1592px;top:104px" width="8" height="7" viewBox="0 0 8 7"><path d="M.6.6L3.200 3.500.6 6.400M4.400.6L7 3.500 4.400 6.400" fill="none" stroke="#dcdcdc" stroke-width="1.100"/></svg>
  <!-- icon panel (clone source) -->
  <div class="abs" style="left:1509px;top:116px;width:99px;height:51px;background:#535353;border-bottom:1px solid #484848"></div>
  <div class="abs" style="left:1545px;top:121px;width:25px;height:5px;background:repeating-linear-gradient(90deg,#474747 0 1px,#5b5b5b 1px 2px)"></div>
  <svg style="left:1519px;top:133px" width="26" height="25" viewBox="0 0 26 23" preserveAspectRatio="none"><path d="M12.500 4.500c0-1.600 1.300-2.700 3.500-2.700s3.500 1.100 3.500 2.700c0 2-1.300 2.800-1.300 4.600 0 1 .6 1.600 2 1.600h3v4.600H8.800v-4.600h3c1.400 0 2-.6 2-1.600 0-1.800-1.300-2.600-1.300-4.600z" fill="#e0e0e0"/><rect x="8.800" y="17" width="14.400" height="2.200" fill="#e0e0e0"/><path d="M0 1h2v2H0zM3 1h5v2H3zM0 4.800h2v2H0zM3 4.800h5v2H3zM0 8.600h2v2H0zM3 8.600h5v2H3z" fill="#e0e0e0"/></svg>
  <span class="t" style="left:1555px;top:138px;font-size:14px;color:#e6e6e6">仿...</span>
  <!-- main panel bg -->
  <div class="abs" style="left:1609px;top:116px;width:311px;height:864px;background:#535353"></div>
  <div class="abs" style="left:1608px;top:116px;width:1px;height:864px;background:#3c3c3c"></div>
  <!-- tabs strip -->
  <div class="abs" style="left:1608px;top:116px;width:312px;height:35px;background:#3e3e3e"></div>
  <div class="abs ptab" style="left:1611px;width:44px"></div>
  <div class="abs ptab" style="left:1656px;width:51px"></div>
  <div class="abs ptab" style="left:1708px;width:48px"></div>
  <div class="abs ptab" style="left:1757px;width:77px"></div>
  <div class="abs" style="left:1835px;top:117px;width:48px;height:35px;background:#535353"></div>
  <span class="t ptx" style="left:1621px">库</span>
  <span class="t ptx" style="left:1667px">颜色</span>
  <span class="t ptx" style="left:1717px">色板</span>
  <span class="t ptx" style="left:1767px">历史记录</span>
  <span class="t ptx" style="left:1845px;color:#f2f2f2">图层</span>
  <!-- filter row -->
  <div class="inp" style="left:1615px;top:162px;width:105px;height:26px"></div>
  <svg style="left:1624px;top:168px" width="14" height="14" viewBox="0 0 14 14"><circle cx="5.400" cy="5.400" r="4.200" fill="none" stroke="#e0e0e0" stroke-width="1.700"/><path d="M8.600 8.600l4.200 4.200" stroke="#e0e0e0" stroke-width="2.200"/></svg>
  <span class="t" style="left:1643px;top:167px;font-size:14px;color:#ececec">类型</span>
  <svg style="left:1707px;top:174px" width="10" height="6" viewBox="0 0 10 6"><path d="M1 1l4 4 4-4" fill="none" stroke="#c8c8c8" stroke-width="1.400"/></svg>
  <svg style="left:1742px;top:167px" width="16" height="13" viewBox="0 0 16 13"><rect x=".8" y=".8" width="14.400" height="11.400" fill="none" stroke="#e0e0e0" stroke-width="1.500"/><path d="M2.500 10.500l3.300-5 2.400 3.200 2-2.400 3 4.200z" fill="#e0e0e0"/></svg>
  <svg style="left:1772px;top:167px" width="14" height="14" viewBox="0 0 14 14"><circle cx="7" cy="7" r="6" fill="none" stroke="#e0e0e0" stroke-width="1.500"/><path d="M11.200 2.800A6 6 0 0 1 2.800 11.200z" fill="#e0e0e0"/></svg>
  <span class="t" style="left:1803px;top:164px;font-family:'Liberation Serif',serif;font-weight:bold;font-size:20.500px;color:#e0e0e0">T</span>
  <svg style="left:1832px;top:166px" width="16" height="16" viewBox="0 0 16 16"><rect x="2.500" y="2.500" width="11" height="11" fill="none" stroke="#e0e0e0" stroke-width="1.500"/><g fill="#535353" stroke="#e0e0e0" stroke-width="1.200"><rect x=".6" y=".6" width="3.600" height="3.600"/><rect x="11.800" y=".6" width="3.600" height="3.600"/><rect x=".6" y="11.800" width="3.600" height="3.600"/><rect x="11.800" y="11.800" width="3.600" height="3.600"/></g></svg>
  <svg style="left:1863px;top:166px" width="15" height="16" viewBox="0 0 15 16"><path d="M4.500 5V.8h6l3.700 3.700v9.700H9" fill="none" stroke="#e0e0e0" stroke-width="1.500"/><path d="M10 .8v4.200h4" fill="none" stroke="#e0e0e0" stroke-width="1.200"/><rect x=".5" y="7" width="8" height="8.500" fill="#e0e0e0"/></svg>
  <div class="abs" style="left:1900px;top:169px;width:9px;height:16px;border-radius:4.500px;background:#3e3e3e"></div>
  <div class="abs" style="left:1899px;top:163px;width:11px;height:11px;border-radius:50%;background:#dedede"></div>
  <div class="abs hsep" style="top:191px"></div>
  <!-- blend row -->
  <div class="inp" style="left:1615px;top:199px;width:145px;height:25px"></div>
  <span class="t" style="left:1625px;top:203px;font-size:14px;color:#ececec">正常</span>
  <svg style="left:1747px;top:210px" width="10" height="6" viewBox="0 0 10 6"><path d="M1 1l4 4 4-4" fill="none" stroke="#c8c8c8" stroke-width="1.400"/></svg>
  <span class="t lbl" style="left:1770px;top:202px;font-size:14.500px;letter-spacing:-0.3px">不透明度:</span>
  <div class="inp" style="left:1842px;top:199px;width:66px;height:21px"></div>
  <div class="abs" style="left:1889px;top:200px;width:1px;height:19px;background:#626262"></div>
  <span class="t" style="left:1844px;top:203px;font-size:13px;color:#f0f0f0">100%</span>
  <svg style="left:1894px;top:208px" width="10" height="6" viewBox="0 0 10 6"><path d="M1 1l4 4 4-4" fill="none" stroke="#c8c8c8" stroke-width="1.400"/></svg>
  <div class="abs hsep" style="top:227px"></div>
  <!-- lock row -->
  <span class="t lbl" style="left:1618px;top:238px;font-size:14.500px">锁定:</span>
  <svg style="left:1664px;top:239px" width="15" height="14" viewBox="0 0 15 14"><rect x=".5" y=".5" width="14" height="13" fill="#6e6e6e" stroke="#9a9a9a"/><path d="M1 1h4.300v4H1zM9.700 1H14v4H9.700zM5.300 5h4.400v4H5.300zM1 9h4.300v4H1zM9.700 9H14v4H9.700z" fill="#a9a9a9"/></svg>
  <svg style="left:1692px;top:237px" width="17" height="17" viewBox="0 0 20 21"><path d="M17.200.6c1.200-.6 2.600.6 2 1.900L11.400 13.600 8.200 11.200Z" fill="#9b9b9b"/><path d="M7.300 12.200l3.200 2.400c.2 2.600-1.400 4.600-4.200 5.300-2 .5-4.300.3-5.800-.4 2.100-.5 2.600-1.600 3.100-3.400.5-2 1.800-3.500 3.700-3.900z" fill="#9b9b9b"/></svg>
  <svg style="left:1718px;top:237px" width="16" height="16" viewBox="0 0 24 24"><path d="M12 3v18M3 12h18" stroke="#dedede" stroke-width="2.400"/><path d="M12 .2l4.400 5.400H7.600zM12 23.800l4.400-5.400H7.600zM.2 12l5.400-4.400v8.800zM23.800 12l-5.400-4.400v8.800z" fill="#dedede"/></svg>
  <svg style="left:1745px;top:237px" width="19" height="17" viewBox="0 0 19 17"><path d="M4.500 0v13.200h14M0 3.800h11.500l3.200 3V17" fill="none" stroke="#dedede" stroke-width="1.500"/><path d="M16 1l2 2" stroke="#dedede" stroke-width="1"/></svg>
  <svg style="left:1775px;top:237px" width="14" height="16" viewBox="0 0 14 16"><path d="M3.400 7V4.600a3.600 3.600 0 0 1 7.200 0V7" fill="none" stroke="#e4e4e4" stroke-width="1.900"/><rect x=".6" y="6.600" width="12.800" height="9" rx="1" fill="#e4e4e4"/><circle cx="7" cy="11" r="1.300" fill="#535353"/></svg>
  <span class="t lbl" style="left:1800px;top:238px;font-size:14.500px">填充:</span>
  <div class="inp" style="left:1842px;top:236px;width:66px;height:21px"></div>
  <div class="abs" style="left:1889px;top:237px;width:1px;height:19px;background:#626262"></div>
  <span class="t" style="left:1844px;top:240px;font-size:13px;color:#f0f0f0">100%</span>
  <svg style="left:1894px;top:245px" width="10" height="6" viewBox="0 0 10 6"><path d="M1 1l4 4 4-4" fill="none" stroke="#c8c8c8" stroke-width="1.400"/></svg>
  <!-- layer rows -->
  <div class="abs" style="left:1609px;top:266px;width:311px;height:1px;background:#454545"></div>
  <div class="abs" style="left:1648px;top:267px;width:272px;height:49px;background:#6b6b6b"></div>
  <div class="abs" style="left:1609px;top:316px;width:311px;height:1px;background:#454545"></div>
  <div class="abs" style="left:1609px;top:367px;width:311px;height:1px;background:#454545"></div>
  <div class="abs" style="left:1609px;top:419px;width:311px;height:1px;background:#454545"></div>
  <div class="abs" style="left:1647px;top:267px;width:1px;height:152px;background:#474747"></div>
  <!-- eyes -->
  <svg class="eye" style="left:1620px;top:286px" width="17" height="12" viewBox="0 0 17 12"><path d="M.4 6C2.600 2.200 5.300.5 8.500.5S14.400 2.200 16.600 6c-2.200 3.800-4.900 5.500-8.100 5.500S2.600 9.800.4 6z" fill="#e4e4e4"/><circle cx="8.500" cy="5.800" r="3.200" fill="#535353"/><circle cx="8.500" cy="5.800" r="1.700" fill="#e4e4e4"/></svg>
  <svg class="eye" style="left:1620px;top:338px" width="17" height="12" viewBox="0 0 17 12"><path d="M.4 6C2.600 2.200 5.300.5 8.500.5S14.400 2.200 16.600 6c-2.200 3.800-4.900 5.500-8.100 5.500S2.600 9.800.4 6z" fill="#e4e4e4"/><circle cx="8.500" cy="5.800" r="3.200" fill="#535353"/><circle cx="8.500" cy="5.800" r="1.700" fill="#e4e4e4"/></svg>
  <svg class="eye" style="left:1620px;top:389px" width="17" height="12" viewBox="0 0 17 12"><path d="M.4 6C2.600 2.200 5.300.5 8.500.5S14.400 2.200 16.600 6c-2.200 3.800-4.900 5.500-8.100 5.500S2.600 9.800.4 6z" fill="#e4e4e4"/><circle cx="8.500" cy="5.800" r="3.200" fill="#535353"/><circle cx="8.500" cy="5.800" r="1.700" fill="#e4e4e4"/></svg>
  <!-- layer 1 thumbs -->
  <div class="abs" style="left:1652px;top:272px;width:40px;height:40px;background:#6b6b6b;border:1px solid #2e2e2e"></div>
  <svg style="left:1661px;top:281px" width="24" height="23" viewBox="0 0 24 23"><rect width="24" height="23" fill="#fff"/><rect y="2" width="24" height="18" fill="#3f9a26"/><path d="M0 6h24M0 11h24M0 16h24" stroke="#5fc23c" stroke-width="2" stroke-dasharray="3 2 5 3"/><path d="M2 3h20M3 9h18M1 14h22M2 18h20" stroke="#2c7a18" stroke-width="1.500" stroke-dasharray="2 4 3 2"/><path d="M2 1h3M8 1h3M14 1h3M19 1h3" stroke="#cfe8c6" stroke-width="1.200"/></svg>
  <div class="abs" style="left:1674px;top:294px;width:18px;height:18px;background:#6b6b6b;border:1px solid #2e2e2e"></div>
  <svg style="left:1677px;top:297px" width="13" height="13" viewBox="0 0 13 13"><path d="M4 4.500V.5h5l3.500 3.500V12H8" fill="#e0e0e0"/><path d="M8 .8v4h4" fill="none" stroke="#6b6b6b" stroke-width="1"/><rect x=".3" y="6.300" width="6.500" height="6.400" fill="#e0e0e0" stroke="#6b6b6b" stroke-width=".8"/></svg>
  <svg style="left:1696px;top:284px" width="11" height="18" viewBox="0 0 11 18"><rect x="2" y="1" width="7" height="8.600" rx="3.500" fill="none" stroke="#e0e0e0" stroke-width="1.800"/><rect x="2" y="8.400" width="7" height="8.600" rx="3.500" fill="none" stroke="#e0e0e0" stroke-width="1.800"/></svg>
  <div class="abs" style="left:1711px;top:272px;width:40px;height:40px;background:#6b6b6b;border:1px solid #2e2e2e"></div>
  <svg style="left:1708px;top:269px" width="46" height="46" viewBox="0 0 46 46"><path d="M16 1H1.500V45H16M30 1H44.500V45H30" fill="none" stroke="#f4f4f4" stroke-width="1.500"/></svg>
  <div class="abs" style="left:1720px;top:281px;width:24px;height:24px;background:#000"></div>
  <span class="t" style="left:1726px;top:280px;font-family:'Liberation Serif',serif;font-style:italic;font-size:27px;color:#fff;transform:scaleX(.8);transform-origin:0 0">0</span>
  <span class="t" style="left:1762px;top:284px;font-size:15px;color:#f0f0f0">草地2</span>
  <!-- layer 2 -->
  <span class="t" style="left:1663.500px;top:331.500px;font-family:'Liberation Serif',serif;font-weight:bold;font-size:27px;color:#dedede">T</span>
  <span class="t" style="left:1704px;top:338px;font-size:14px;color:#e8e8e8">0</span>
  <!-- layer 3 -->
  <div class="abs" style="left:1652px;top:375px;width:40px;height:40px;background:#535353;border:1px solid #2e2e2e"></div>
  <div class="abs" style="left:1661px;top:383px;width:24px;height:24px;background:#fff"></div>
  <span class="t" style="left:1705px;top:387px;font-size:15px;color:#f0f0f0">背景</span>
  <div class="abs" style="left:1615px;top:420px;width:305px;height:517px;background:#4d4d4d"></div>
  <!-- bottom bar of layers panel -->
  <div class="abs" style="left:1609px;top:937px;width:311px;height:1px;background:#444"></div>
  <svg style="left:1898px;top:946px" width="15" height="15" viewBox="0 0 15 15"><rect x=".7" y=".7" width="13.600" height="13.600" fill="none" stroke="#d8d8d8" stroke-width="1.300"/><path d="M7.500 4v7M4 7.500h7" stroke="#d8d8d8" stroke-width="1.300"/></svg>
  <!-- layers panel bottom icons (mostly hidden behind watermark) -->
  <svg style="left:1729px;top:946px" width="18" height="14" viewBox="0 0 18 14"><rect x="1" y="3.500" width="9" height="7" rx="3.500" fill="none" stroke="#cfcfcf" stroke-width="1.500"/><rect x="8" y="3.500" width="9" height="7" rx="3.500" fill="none" stroke="#cfcfcf" stroke-width="1.500"/></svg>
  <span class="t" style="left:1764px;top:945px;font-size:14px;font-style:italic;font-weight:bold;color:#cfcfcf;font-family:'Liberation Serif',serif">fx</span>
  <svg style="left:1796px;top:946px" width="18" height="14" viewBox="0 0 18 14"><rect width="18" height="14" fill="#d6d6d6"/><circle cx="9" cy="7" r="3.800" fill="#535353"/></svg>
  <svg style="left:1830px;top:945px" width="22" height="19" viewBox="0 0 22 19"><circle cx="8" cy="8" r="6.800" fill="none" stroke="#cfcfcf" stroke-width="1.400"/><path d="M3.200 12.800A6.800 6.800 0 0 1 12.800 3.200z" fill="#cfcfcf"/><path d="M15.500 15h5l-2.500 2.800z" fill="#e8e8e8"/></svg>
  <svg style="left:1863px;top:946px" width="18" height="14" viewBox="0 0 18 14"><path d="M0 0h6.500l1.800 2H18v12H0z" fill="#d6d6d6"/></svg>
  <div class="abs" style="left:1609px;top:969px;width:311px;height:2px;background:#454545"></div>
  <div class="abs" style="left:1609px;top:971px;width:311px;height:9px;background:#5a5a5a"></div>
  <!-- below the panel: canvas showing through, and scrollbar column -->
  <div class="abs" style="left:1609px;top:980px;width:290px;height:28px;background:#292929"></div>
  <div class="abs" style="left:1899px;top:980px;width:21px;height:28px;background:#4c4c4c"></div>
</div>
<!-- BRUSH SETTINGS PANEL -->
<div id="bpanel" class="abs" style="left:884px;top:181px;width:444px;height:749px;background:#535353;border-radius:4px 4px 1px 1px;box-shadow:0 1px 5px rgba(0,0,0,.5);border-right:1px solid #474747;border-left:1px solid #474747;overflow:hidden">
<div class="abs" style="left:0;top:0;width:443px;height:17px;background:#484848"></div>
<div class="abs" style="left:0;top:17px;width:443px;height:35px;background:#424242;border-top:1px solid #3d3d3d"></div>
<div class="abs" style="left:0;top:18px;width:77px;height:34px;background:#535353"></div>
<div class="abs" style="left:78px;top:18px;width:49px;height:33px;background:#474747"></div>
<span class="t" style="left:12px;top:26px;font-size:14px;color:#f2f2f2;letter-spacing:-0.1px">画笔设置</span>
<span class="t" style="left:88px;top:26px;font-size:14px;color:#a2a2a2">画笔</span>
<svg style="left:405px;top:5px" width="8" height="7" viewBox="0 0 8 7"><path d="M3.600.6L1 3.500l2.600 2.900M7.400.6L4.800 3.500l2.600 2.900" fill="none" stroke="#dcdcdc" stroke-width="1.100"/></svg>
<svg style="left:426px;top:4px" width="10" height="10" viewBox="0 0 10 10"><path d="M1.200 1.200l7.600 7.600M8.800 1.200L1.200 8.800" stroke="#d4d4d4" stroke-width="2.200"/></svg>
<svg style="left:426px;top:29px" width="11" height="9" viewBox="0 0 11 9"><path d="M0 1h11M0 3.300h11M0 5.600h11M0 7.900h11" stroke="#d0d0d0" stroke-width="1.100"/></svg>
<div class="inp" style="left:46px;top:66px;width:59px;height:27px;border-color:#5e5e5e"></div>
<span class="t" style="left:60px;top:71px;font-size:14.500px;color:#ececec">画笔</span>
<div class="abs" style="left:9px;top:107px;width:136px;height:388px;border:1px solid #474747"></div>
<div class="abs" style="left:10px;top:108px;width:134px;height:26px;background:#6a6a6a"></div>
<span class="t" style="left:31px;top:112px;font-size:14.500px;color:#f0f0f0;letter-spacing:.3px">画笔笔尖形状</span>
<div class="abs" style="left:10px;top:164px;width:134px;height:1px;background:#484848"></div>
<div class="abs" style="left:23px;top:142px;width:13px;height:13px;background:#dedede;border-radius:2px"></div>
<svg style="left:23px;top:142px" width="13" height="13" viewBox="0 0 13 13"><path d="M2.800 6.600l2.700 2.900 4.800-6" fill="none" stroke="#1e1e1e" stroke-width="2"/></svg>
<span class="t" style="left:44px;top:141px;font-size:14.500px;color:#e6e6e6;letter-spacing:.4px">形状动态</span>
<svg style="left:123px;top:141px" width="12" height="14" viewBox="0 0 12 14"><path d="M3.300 5.500V3.600a2.700 2.700 0 0 1 5.400 0v.6" fill="none" stroke="#d4d4d4" stroke-width="1.300"/><rect x=".7" y="5.700" width="10.600" height="7.600" fill="none" stroke="#d4d4d4" stroke-width="1.300"/><rect x="5.200" y="8.300" width="1.600" height="2.400" fill="#d4d4d4"/></svg>
<div class="abs" style="left:10px;top:194px;width:134px;height:1px;background:#484848"></div>
<div class="abs" style="left:23px;top:172px;width:13px;height:13px;background:#dedede;border-radius:2px"></div>
<svg style="left:23px;top:172px" width="13" height="13" viewBox="0 0 13 13"><path d="M2.800 6.600l2.700 2.900 4.800-6" fill="none" stroke="#1e1e1e" stroke-width="2"/></svg>
<span class="t" style="left:44px;top:171px;font-size:14.500px;color:#e6e6e6;letter-spacing:.4px">散布</span>
<svg style="left:123px;top:171px" width="12" height="14" viewBox="0 0 12 14"><path d="M3.300 5.500V3.600a2.700 2.700 0 0 1 5.400 0v.6" fill="none" stroke="#d4d4d4" stroke-width="1.300"/><rect x=".7" y="5.700" width="10.600" height="7.600" fill="none" stroke="#d4d4d4" stroke-width="1.300"/><rect x="5.200" y="8.300" width="1.600" height="2.400" fill="#d4d4d4"/></svg>
<div class="abs" style="left:10px;top:224px;width:134px;height:1px;background:#484848"></div>
<div class="abs" style="left:23px;top:202px;width:13px;height:13px;background:#4c4c4c;border:1px solid #6c6c6c;border-radius:2px"></div>
<span class="t" style="left:44px;top:201px;font-size:14.500px;color:#e6e6e6;letter-spacing:.4px">纹理</span>
<svg style="left:123px;top:201px" width="12" height="14" viewBox="0 0 12 14"><path d="M3.300 5.500V3.600a2.700 2.700 0 0 1 5.400 0v.6" fill="none" stroke="#d4d4d4" stroke-width="1.300"/><rect x=".7" y="5.700" width="10.600" height="7.600" fill="none" stroke="#d4d4d4" stroke-width="1.300"/><rect x="5.200" y="8.300" width="1.600" height="2.400" fill="#d4d4d4"/></svg>
<div class="abs" style="left:10px;top:254px;width:134px;height:1px;background:#484848"></div>
<div class="abs" style="left:23px;top:232px;width:13px;height:13px;background:#4c4c4c;border:1px solid #6c6c6c;border-radius:2px"></div>
<span class="t" style="left:44px;top:231px;font-size:14.500px;color:#e6e6e6;letter-spacing:.4px">双重画笔</span>
<svg style="left:123px;top:231px" width="12" height="14" viewBox="0 0 12 14"><path d="M3.300 5.500V3.600a2.700 2.700 0 0 1 5.400 0v.6" fill="none" stroke="#d4d4d4" stroke-width="1.300"/><rect x=".7" y="5.700" width="10.600" height="7.600" fill="none" stroke="#d4d4d4" stroke-width="1.300"/><rect x="5.200" y="8.300" width="1.600" height="2.400" fill="#d4d4d4"/></svg>
<div class="abs" style="left:10px;top:284px;width:134px;height:1px;background:#484848"></div>
<div class="abs" style="left:23px;top:262px;width:13px;height:13px;background:#4c4c4c;border:1px solid #6c6c6c;border-radius:2px"></div>
<span class="t" style="left:44px;top:261px;font-size:14.500px;color:#e6e6e6;letter-spacing:.4px">颜色动态</span>
<svg style="left:123px;top:261px" width="12" height="14" viewBox="0 0 12 14"><path d="M3.300 5.500V3.600a2.700 2.700 0 0 1 5.400 0v.6" fill="none" stroke="#d4d4d4" stroke-width="1.300"/><rect x=".7" y="5.700" width="10.600" height="7.600" fill="none" stroke="#d4d4d4" stroke-width="1.300"/><rect x="5.200" y="8.300" width="1.600" height="2.400" fill="#d4d4d4"/></svg>
<div class="abs" style="left:10px;top:314px;width:134px;height:1px;background:#484848"></div>
<div class="abs" style="left:23px;top:292px;width:13px;height:13px;background:#4c4c4c;border:1px solid #6c6c6c;border-radius:2px"></div>
<span class="t" style="left:44px;top:291px;font-size:14.500px;color:#e6e6e6;letter-spacing:.4px">传递</span>
<svg style="left:123px;top:291px" width="12" height="14" viewBox="0 0 12 14"><path d="M3.300 5.500V3.600a2.700 2.700 0 0 1 5.400 0v.6" fill="none" stroke="#d4d4d4" stroke-width="1.300"/><rect x=".7" y="5.700" width="10.600" height="7.600" fill="none" stroke="#d4d4d4" stroke-width="1.300"/><rect x="5.200" y="8.300" width="1.600" height="2.400" fill="#d4d4d4"/></svg>
<div class="abs" style="left:10px;top:344px;width:134px;height:1px;background:#484848"></div>
<div class="abs" style="left:23px;top:322px;width:13px;height:13px;background:#4c4c4c;border:1px solid #6c6c6c;border-radius:2px"></div>
<span class="t" style="left:44px;top:321px;font-size:14.500px;color:#e6e6e6;letter-spacing:.4px">画笔笔势</span>
<svg style="left:123px;top:321px" width="12" height="14" viewBox="0 0 12 14"><path d="M3.300 5.500V3.600a2.700 2.700 0 0 1 5.400 0v.6" fill="none" stroke="#d4d4d4" stroke-width="1.300"/><rect x=".7" y="5.700" width="10.600" height="7.600" fill="none" stroke="#d4d4d4" stroke-width="1.300"/><rect x="5.200" y="8.300" width="1.600" height="2.400" fill="#d4d4d4"/></svg>
<div class="abs" style="left:23px;top:352px;width:13px;height:13px;background:#4c4c4c;border:1px solid #6c6c6c;border-radius:2px"></div>
<span class="t" style="left:44px;top:351px;font-size:14.500px;color:#e6e6e6;letter-spacing:.4px">杂色</span>
<svg style="left:123px;top:351px" width="12" height="14" viewBox="0 0 12 14"><path d="M3.300 5.500V3.600a2.700 2.700 0 0 1 5.400 0v.6" fill="none" stroke="#d4d4d4" stroke-width="1.300"/><rect x=".7" y="5.700" width="10.600" height="7.600" fill="none" stroke="#d4d4d4" stroke-width="1.300"/><rect x="5.200" y="8.300" width="1.600" height="2.400" fill="#d4d4d4"/></svg>
<div class="abs" style="left:23px;top:382px;width:13px;height:13px;background:#4c4c4c;border:1px solid #6c6c6c;border-radius:2px"></div>
<span class="t" style="left:44px;top:381px;font-size:14.500px;color:#e6e6e6;letter-spacing:.4px">湿边</span>
<svg style="left:123px;top:381px" width="12" height="14" viewBox="0 0 12 14"><path d="M3.300 5.500V3.600a2.700 2.700 0 0 1 5.400 0v.6" fill="none" stroke="#d4d4d4" stroke-width="1.300"/><rect x=".7" y="5.700" width="10.600" height="7.600" fill="none" stroke="#d4d4d4" stroke-width="1.300"/><rect x="5.200" y="8.300" width="1.600" height="2.400" fill="#d4d4d4"/></svg>
<div class="abs" style="left:23px;top:412px;width:13px;height:13px;background:#4c4c4c;border:1px solid #6c6c6c;border-radius:2px"></div>
<span class="t" style="left:44px;top:411px;font-size:14.500px;color:#e6e6e6;letter-spacing:.4px">建立</span>
<svg style="left:123px;top:411px" width="12" height="14" viewBox="0 0 12 14"><path d="M3.300 5.500V3.600a2.700 2.700 0 0 1 5.400 0v.6" fill="none" stroke="#d4d4d4" stroke-width="1.300"/><rect x=".7" y="5.700" width="10.600" height="7.600" fill="none" stroke="#d4d4d4" stroke-width="1.300"/><rect x="5.200" y="8.300" width="1.600" height="2.400" fill="#d4d4d4"/></svg>
<div class="abs" style="left:23px;top:442px;width:13px;height:13px;background:#dedede;border-radius:2px"></div>
<svg style="left:23px;top:442px" width="13" height="13" viewBox="0 0 13 13"><path d="M2.800 6.600l2.700 2.900 4.800-6" fill="none" stroke="#1e1e1e" stroke-width="2"/></svg>
<span class="t" style="left:44px;top:441px;font-size:14.500px;color:#e6e6e6;letter-spacing:.4px">平滑</span>
<svg style="left:123px;top:441px" width="12" height="14" viewBox="0 0 12 14"><path d="M3.300 5.500V3.600a2.700 2.700 0 0 1 5.400 0v.6" fill="none" stroke="#d4d4d4" stroke-width="1.300"/><rect x=".7" y="5.700" width="10.600" height="7.600" fill="none" stroke="#d4d4d4" stroke-width="1.300"/><rect x="5.200" y="8.300" width="1.600" height="2.400" fill="#d4d4d4"/></svg>
<div class="abs" style="left:23px;top:472px;width:13px;height:13px;background:#4c4c4c;border:1px solid #6c6c6c;border-radius:2px"></div>
<span class="t" style="left:44px;top:471px;font-size:14.500px;color:#e6e6e6;letter-spacing:.4px">保护纹理</span>
<svg style="left:123px;top:471px" width="12" height="14" viewBox="0 0 12 14"><path d="M3.300 5.500V3.600a2.700 2.700 0 0 1 5.400 0v.6" fill="none" stroke="#d4d4d4" stroke-width="1.300"/><rect x=".7" y="5.700" width="10.600" height="7.600" fill="none" stroke="#d4d4d4" stroke-width="1.300"/><rect x="5.200" y="8.300" width="1.600" height="2.400" fill="#d4d4d4"/></svg>
<div class="abs" style="left:158px;top:66px;width:274px;height:153px;background:#4f4f4f;overflow:hidden" id="bgrid">
<svg style="left:0;top:0" width="274" height="153" viewBox="0 0 274 153">
<defs>
<filter id="spk1" x="-15%" y="-15%" width="130%" height="130%"><feTurbulence type="fractalNoise" baseFrequency="0.42" numOctaves="2" seed="3" result="n"/><feDisplacementMap in="SourceGraphic" in2="n" scale="7" xChannelSelector="R" yChannelSelector="G" result="d"/><feTurbulence type="fractalNoise" baseFrequency="0.6" numOctaves="2" seed="8" result="n2"/><feColorMatrix in="n2" type="matrix" values="0 0 0 0 1  0 0 0 0 1  0 0 0 0 1  4.500 4.500 0 0 -3.700" result="m"/><feComposite in="m" in2="d" operator="in"/></filter>
<filter id="spk2" x="-10%" y="-10%" width="120%" height="120%"><feTurbulence type="fractalNoise" baseFrequency="0.8" numOctaves="1" seed="9" result="n"/><feColorMatrix in="n" type="matrix" values="0 0 0 0 1  0 0 0 0 1  0 0 0 0 1  6 6 0 0 -6.200"/><feComposite in2="SourceGraphic" operator="in"/></filter>
<filter id="spk3" x="-10%" y="-10%" width="120%" height="120%"><feTurbulence type="fractalNoise" baseFrequency="0.7" numOctaves="2" seed="5" result="n"/><feColorMatrix in="n" type="matrix" values="0 0 0 0 1  0 0 0 0 1  0 0 0 0 1  6 6 0 0 -5.300"/><feComposite in2="SourceGraphic" operator="in"/></filter>
<radialGradient id="fade"><stop offset="0" stop-color="#fff"/><stop offset=".55" stop-color="#fff" stop-opacity=".8"/><stop offset="1" stop-color="#fff" stop-opacity=".15"/></radialGradient>
<radialGradient id="rg"><stop offset="0" stop-color="#fff"/><stop offset=".25" stop-color="#fff" stop-opacity=".7"/><stop offset="1" stop-color="#fff" stop-opacity="0"/></radialGradient>
</defs>
<rect x="0" y="0" width="241" height="153" fill="#535353"/>
<rect x="0" y="0" width="1" height="153" fill="#464646"/>
<rect x="40" y="0" width="1" height="153" fill="#464646"/>
<rect x="80" y="0" width="1" height="153" fill="#464646"/>
<rect x="120" y="0" width="1" height="153" fill="#464646"/>
<rect x="160" y="0" width="1" height="153" fill="#464646"/>
<rect x="200" y="0" width="1" height="153" fill="#464646"/>
<rect x="241" y="0" width="1" height="153" fill="#464646"/>
<rect x="0" y="0" width="241" height="1" fill="#464646"/>
<rect x="0" y="40" width="241" height="1" fill="#464646"/>
<rect x="0" y="80" width="241" height="1" fill="#464646"/>
<rect x="0" y="121" width="241" height="1" fill="#464646"/>
<polygon points="16.0,3.0 31.0,10.0 27.0,21.0 18.0,19.0 10.0,12.0" fill="#fff" filter="url(#spk1)"/>
<polygon points="51.2,2.9 75.7,9.3 69.3,22.9 45.4,12.3" fill="#fff" filter="url(#spk1)"/>
<polygon points="95.8,2.0 115.3,12.7 104.2,23.8 85.2,12.2" fill="#fff" filter="url(#spk1)"/>
<polygon points="132.1,2.0 158.7,10.5 149.0,23.3 122.4,12.7" fill="#fff" filter="url(#spk1)"/>
<path d="M178.4 13.5h5M178.4 13.5l2.200 -1.500" stroke="#d0d0d0" stroke-width=".8" opacity=".8"/>
<circle cx="221.0" cy="12.5" r="3.5" fill="url(#rg)" opacity="0.30"/>
<circle cx="221.0" cy="12.5" r="1.200" fill="#fff" opacity="0.55"/>
<path d="M217.8 10.9L224.2 14.1M224.2 10.8L217.8 14.2M221.0 9.0V16.0" stroke="#fff" stroke-width=".5" opacity="0.22"/>
<text x="20.5" y="36.3" text-anchor="middle" font-size="11.700" fill="#e2e2e2" font-family="Liberation Sans, sans-serif">23</text>
<text x="60.6" y="36.3" text-anchor="middle" font-size="11.700" fill="#e2e2e2" font-family="Liberation Sans, sans-serif">36</text>
<text x="100.7" y="36.3" text-anchor="middle" font-size="11.700" fill="#e2e2e2" font-family="Liberation Sans, sans-serif">44</text>
<text x="140.8" y="36.3" text-anchor="middle" font-size="11.700" fill="#e2e2e2" font-family="Liberation Sans, sans-serif">60</text>
<text x="180.9" y="36.3" text-anchor="middle" font-size="11.700" fill="#e2e2e2" font-family="Liberation Sans, sans-serif">14</text>
<text x="221.0" y="36.3" text-anchor="middle" font-size="11.700" fill="#e2e2e2" font-family="Liberation Sans, sans-serif">26</text>
<circle cx="20.5" cy="52.7" r="4.5" fill="url(#rg)" opacity="0.30"/>
<circle cx="20.5" cy="52.7" r="1.200" fill="#fff" opacity="0.55"/>
<path d="M16.4 50.7L24.6 54.7M24.6 50.5L16.4 55.0M20.5 48.2V57.2" stroke="#fff" stroke-width=".5" opacity="0.22"/>
<circle cx="60.6" cy="52.7" r="5.0" fill="url(#rg)" opacity="0.39"/>
<circle cx="60.6" cy="52.7" r="1.200" fill="#fff" opacity="0.70"/>
<path d="M56.1 50.5L65.1 55.0M65.1 50.2L56.1 55.2M60.6 47.7V57.7" stroke="#fff" stroke-width=".5" opacity="0.28"/>
<circle cx="100.7" cy="52.7" r="5.0" fill="url(#rg)" opacity="0.39"/>
<circle cx="100.7" cy="52.7" r="1.200" fill="#fff" opacity="0.70"/>
<path d="M96.2 50.5L105.2 55.0M105.2 50.2L96.2 55.2M100.7 47.7V57.7" stroke="#fff" stroke-width=".5" opacity="0.28"/>
<circle cx="140.8" cy="52.7" r="5.0" fill="url(#rg)" opacity="0.36"/>
<circle cx="140.8" cy="52.7" r="1.200" fill="#fff" opacity="0.65"/>
<path d="M136.3 50.5L145.3 55.0M145.3 50.2L136.3 55.2M140.8 47.7V57.7" stroke="#fff" stroke-width=".5" opacity="0.26"/>
<path d="M173.9 64.2C174.9 54.2 178.4 47.2 185.4 43.2" fill="none" stroke="#f2f2f2" stroke-width="1.100"/>
<path d="M217.5 64.2C217.5 54.2 215.5 48.2 212.0 44.2M218.0 64.2C218.5 54.2 220.5 48.2 224.5 42.2M218.5 64.2C219.5 57.2 222.5 51.2 228.0 48.2" fill="none" stroke="#f2f2f2" stroke-width="1"/>
<text x="20.5" y="76.5" text-anchor="middle" font-size="11.700" fill="#e2e2e2" font-family="Liberation Sans, sans-serif">33</text>
<text x="60.6" y="76.5" text-anchor="middle" font-size="11.700" fill="#e2e2e2" font-family="Liberation Sans, sans-serif">42</text>
<text x="100.7" y="76.5" text-anchor="middle" font-size="11.700" fill="#e2e2e2" font-family="Liberation Sans, sans-serif">55</text>
<text x="140.8" y="76.5" text-anchor="middle" font-size="11.700" fill="#e2e2e2" font-family="Liberation Sans, sans-serif">70</text>
<text x="180.9" y="76.5" text-anchor="middle" font-size="11.700" fill="#e2e2e2" font-family="Liberation Sans, sans-serif">112</text>
<text x="221.0" y="76.5" text-anchor="middle" font-size="11.700" fill="#e2e2e2" font-family="Liberation Sans, sans-serif">134</text>
<polygon points="20.0,82.4 22.5,88.4 26.0,85.9 25.0,91.4 30.0,91.9 26.0,95.4 28.0,99.4 22.5,97.9 20.5,99.9 19.5,99.9 17.5,97.9 12.0,99.4 14.0,95.4 10.0,91.9 15.0,91.4 14.0,85.9 17.5,88.4" fill="#fff"/>
<path d="M20.0 99.4l-1.200 5" stroke="#e8e8e8" stroke-width=".8"/>
<path d="M60.6 83.4C63.6 88.4 68.6 93.4 67.6 98.4C66.6 102.4 62.6 102.9 60.6 102.9C58.6 102.9 54.6 102.4 53.6 98.4C52.6 93.4 57.6 88.4 60.6 83.4z" fill="#858585"/>
<path d="M60.6 85.4V102.4" stroke="#777" stroke-width=".6"/>
<path d="M100.7 83.4C103.7 88.4 108.7 93.4 107.7 98.4C106.7 102.4 102.7 102.9 100.7 102.9C98.7 102.9 94.7 102.4 93.7 98.4C92.7 93.4 97.7 88.4 100.7 83.4z" fill="#858585"/>
<path d="M100.7 85.4V102.4" stroke="#777" stroke-width=".6"/>
<ellipse cx="140.3" cy="93.9" rx="12.500" ry="11.500" fill="#fff" filter="url(#spk3)"/>
<polygon points="171.5,83.3 196.0,89.7 189.6,103.3 165.7,92.7" fill="#fff" filter="url(#spk1)"/>
<polygon points="211.6,83.3 236.1,89.7 229.7,103.3 205.8,92.7" fill="#fff" filter="url(#spk1)"/>
<text x="20.5" y="116.7" text-anchor="middle" font-size="11.700" fill="#e2e2e2" font-family="Liberation Sans, sans-serif">74</text>
<text x="60.6" y="116.7" text-anchor="middle" font-size="11.700" fill="#e2e2e2" font-family="Liberation Sans, sans-serif">95</text>
<text x="100.7" y="116.7" text-anchor="middle" font-size="11.700" fill="#e2e2e2" font-family="Liberation Sans, sans-serif">95</text>
<text x="140.8" y="116.7" text-anchor="middle" font-size="11.700" fill="#e2e2e2" font-family="Liberation Sans, sans-serif">90</text>
<text x="180.9" y="116.7" text-anchor="middle" font-size="11.700" fill="#e2e2e2" font-family="Liberation Sans, sans-serif">36</text>
<text x="221.0" y="116.7" text-anchor="middle" font-size="11.700" fill="#e2e2e2" font-family="Liberation Sans, sans-serif">33</text>
<polygon points="11.1,123.5 35.6,129.9 29.2,143.5 5.3,132.9" fill="#fff" filter="url(#spk1)"/>
<mask id="m66"><ellipse cx="60.1" cy="134.6" rx="13" ry="12.500" fill="url(#fade)"/></mask><g mask="url(#m66)"><ellipse cx="60.1" cy="134.6" rx="13" ry="12.500" fill="#fff" filter="url(#spk2)"/></g>
<mask id="m39"><ellipse cx="100.2" cy="134.6" rx="10" ry="11" fill="url(#fade)"/></mask><g mask="url(#m39)"><ellipse cx="100.2" cy="134.6" rx="10" ry="11" fill="#fff" filter="url(#spk2)"/></g>
<ellipse cx="100.2" cy="134.6" rx="5" ry="6" fill="#fff" filter="url(#spk3)"/>
<polygon points="131.4,123.5 155.9,129.9 149.5,143.5 125.6,132.9" fill="#fff" filter="url(#spk1)"/>
<ellipse cx="180.4" cy="134.6" rx="4.500" ry="1.300" fill="#e8e8e8" transform="rotate(-22 180.4 134.6)"/>
<polygon points="211.6,123.5 236.1,129.9 229.7,143.5 205.8,132.9" fill="#fff" filter="url(#spk1)"/>
<text x="20.5" y="156.9" text-anchor="middle" font-size="11.700" fill="#e2e2e2" font-family="Liberation Sans, sans-serif">63</text>
<text x="60.6" y="156.9" text-anchor="middle" font-size="11.700" fill="#e2e2e2" font-family="Liberation Sans, sans-serif">66</text>
<text x="100.7" y="156.9" text-anchor="middle" font-size="11.700" fill="#e2e2e2" font-family="Liberation Sans, sans-serif">39</text>
<text x="140.8" y="156.9" text-anchor="middle" font-size="11.700" fill="#e2e2e2" font-family="Liberation Sans, sans-serif">63</text>
<text x="180.9" y="156.9" text-anchor="middle" font-size="11.700" fill="#e2e2e2" font-family="Liberation Sans, sans-serif">11</text>
<text x="221.0" y="156.9" text-anchor="middle" font-size="11.700" fill="#e2e2e2" font-family="Liberation Sans, sans-serif">48</text>
<rect x="161.4" y="41.2" width="39.500" height="39.500" fill="none" stroke="#27aae6" stroke-width="2"/>
<rect x="255" y="42" width="15" height="12" fill="#6b6b6b"/>
<path d="M260.500 15l3.700-3.700 3.700 3.700" fill="none" stroke="#8c8c8c" stroke-width="1.300"/>
<path d="M260.500 137.500l3.700 3.700 3.700-3.700" fill="none" stroke="#8c8c8c" stroke-width="1.300"/>
</svg>
</div>
<span class="t" style="left:157px;top:232px;font-size:14.500px;color:#dcdcdc;letter-spacing:.5px">大小</span>
<svg style="left:309px;top:233px" width="17" height="16" viewBox="0 0 17 16"><path d="M4.200 7.500A5 5 0 1 1 9.200 12.600" fill="none" stroke="#dcdcdc" stroke-width="2"/><path d="M.6 5.200h7.200L4.200 9.600z" fill="#dcdcdc"/><path d="M1 15h14.500" stroke="#dcdcdc" stroke-width="1.300"/></svg>
<div class="inp" style="left:337px;top:228px;width:82px;height:25px;border-color:#5e5e5e"></div>
<span class="t" style="left:341px;top:233px;font-size:13.500px;color:#f2f2f2">42 像素</span>
<div class="abs" style="left:159px;top:264px;width:257px;height:3px;background:#727272;border-radius:1.500px"></div>
<svg style="left:205px;top:269px" width="14" height="12" viewBox="0 0 14 12"><path d="M7 .5l5.800 6V11.500H1.200V6.500z" fill="#f4f4f4" stroke="#3c3c3c" stroke-width=".8"/></svg>
<div class="abs" style="left:158px;top:289px;width:13px;height:13px;background:#4c4c4c;border:1px solid #6c6c6c;border-radius:2px"></div>
<span class="t" style="left:180px;top:288px;font-size:14.500px;color:#e2e2e2">翻转 X</span>
<div class="abs" style="left:237px;top:289px;width:13px;height:13px;background:#4c4c4c;border:1px solid #6c6c6c;border-radius:2px"></div>
<span class="t" style="left:259px;top:288px;font-size:14.500px;color:#e2e2e2">翻转 Y</span>
<div class="abs" style="left:329px;top:290px;width:95px;height:95px;border:1px solid #7a7a7a"></div>
<svg style="left:329px;top:290px" width="95" height="95" viewBox="0 0 95 95"><circle cx="48" cy="48" r="31.500" fill="none" stroke="#828282" stroke-width="1.800"/><path d="M16 48h64M48 16v64" stroke="#707070" stroke-width="1"/><circle cx="48" cy="16.500" r="4" fill="#f0f0f0"/><circle cx="48" cy="79.500" r="4" fill="#f0f0f0"/><path d="M83 44l7.500 4-7.500 4z" fill="#f0f0f0"/></svg>
<span class="t" style="left:188px;top:327px;font-size:14.500px;color:#dcdcdc">角度:</span>
<div class="inp" style="left:232px;top:322px;width:74px;height:25px;border-color:#5e5e5e"></div>
<span class="t" style="left:236px;top:328px;font-size:13px;color:#f2f2f2">0°</span>
<span class="t" style="left:188px;top:364px;font-size:14.500px;color:#dcdcdc">圆度:</span>
<div class="inp" style="left:232px;top:360px;width:74px;height:25px;border-color:#5e5e5e"></div>
<span class="t" style="left:236px;top:366px;font-size:13px;color:#f2f2f2">100%</span>
<span class="t" style="left:157px;top:397px;font-size:14.500px;color:#888">硬度</span>
<div class="inp" style="left:345px;top:393px;width:74px;height:25px;border-color:#585858;background:#474747"></div>
<div class="abs" style="left:159px;top:427px;width:257px;height:3px;background:#727272;border-radius:1.500px"></div>
<div class="abs" style="left:158px;top:457px;width:13px;height:13px;background:#dedede;border-radius:2px"></div>
<svg style="left:158px;top:457px" width="13" height="13" viewBox="0 0 13 13"><path d="M2.800 6.600l2.700 2.900 4.800-6" fill="none" stroke="#1e1e1e" stroke-width="2"/></svg>
<span class="t" style="left:180px;top:456px;font-size:14.500px;color:#e6e6e6">间距</span>
<div class="inp" style="left:345px;top:450px;width:74px;height:25px;border-color:#5e5e5e"></div>
<span class="t" style="left:349px;top:456px;font-size:13px;color:#f2f2f2">25%</span>
<div class="abs" style="left:159px;top:485px;width:257px;height:3px;background:#727272;border-radius:1.500px"></div>
<svg style="left:183px;top:490px" width="14" height="12" viewBox="0 0 14 12"><path d="M7 .5l5.800 6V11.500H1.200V6.500z" fill="#f4f4f4" stroke="#3c3c3c" stroke-width=".8"/></svg>
<div class="abs" style="left:14px;top:574px;width:414px;height:125px;background:#767676;border:1px solid #474747;border-left-color:#6a6a6a;border-bottom-color:#6a6a6a"></div>
<svg style="left:14px;top:574px" width="414" height="125" viewBox="0 0 414 125"><path d="M26.2 80.0Q25.5 72.7 30.0 67.1M32.4 76.7Q27.5 76.3 23.0 74.0M25.6 73.5Q30.1 75.5 34.7 73.6M34.5 82.6Q30.5 75.0 28.3 66.7M33.8 67.3Q30.9 74.4 25.8 80.2M24.5 68.0Q33.8 65.2 42.1 70.0M38.3 57.6Q35.6 67.6 27.4 73.8M40.9 71.3Q35.9 66.8 30.6 62.7M28.1 65.6Q34.5 74.2 39.5 83.9M26.0 68.9Q35.9 73.2 46.7 73.3M40.3 66.8Q33.2 75.6 34.5 86.9M45.5 69.7Q40.8 74.3 36.2 78.8M39.1 75.9Q39.5 64.9 42.5 54.4M48.6 83.1Q39.3 74.8 34.2 63.3M44.4 73.4Q47.0 62.6 42.8 52.3M32.0 69.3Q44.2 67.0 54.5 60.0M53.5 78.3Q45.1 69.5 37.7 59.9M36.5 62.1Q45.1 62.7 52.2 67.7M32.7 64.7Q46.4 60.1 60.2 64.8M58.4 71.8Q51.3 64.8 41.5 62.4M60.6 74.1Q45.6 68.6 37.2 55.0M47.9 58.1Q45.1 69.6 51.1 79.7M41.3 63.2Q51.1 58.8 61.7 61.2M56.0 51.7Q56.6 64.3 52.3 76.0M52.9 76.0Q52.8 62.7 51.9 49.4M41.2 47.1Q53.1 54.5 67.1 53.1M71.5 55.7Q57.4 53.0 44.3 58.8M61.2 51.8Q58.7 63.5 55.8 75.0M58.8 53.9Q63.5 62.0 61.0 71.0M67.7 67.0Q60.2 60.2 55.5 51.2M53.8 55.8Q60.0 61.5 66.9 66.3M49.9 71.6Q60.0 63.4 72.9 62.2M64.2 42.8Q66.9 55.8 63.6 68.7M50.7 47.4Q59.9 58.9 74.2 62.6M56.9 61.4Q67.0 62.3 74.7 55.8M74.0 62.7Q67.8 53.1 57.4 48.3M68.1 71.7Q63.8 58.8 66.5 45.4M80.2 65.5Q65.2 58.2 56.8 43.7M63.4 48.5Q72.6 55.1 74.5 66.3M59.6 43.2Q69.5 56.8 83.9 65.4M82.4 39.0Q68.8 49.4 60.4 64.3M59.7 66.4Q71.3 63.6 83.2 62.7M67.3 62.2Q73.1 55.5 81.2 52.0M69.2 55.8Q77.6 57.1 85.7 59.8M67.6 71.8Q75.8 61.2 84.2 50.9M71.2 68.5Q72.9 55.8 82.3 47.1M87.2 50.2Q78.6 52.6 71.4 57.8M80.3 70.7Q82.9 59.9 80.6 49.0M84.4 36.7Q88.2 51.5 81.2 65.1M68.1 54.0Q80.2 60.3 93.7 58.4M91.9 56.1Q85.0 51.8 77.9 47.9M75.1 52.1Q85.8 48.8 93.8 41.1M77.0 54.8Q88.2 58.4 99.2 62.4M86.1 59.9Q90.9 48.8 86.2 37.5M75.1 55.0Q86.1 62.1 99.2 60.8M98.4 32.5Q90.5 46.2 76.7 53.8M104.1 46.6Q91.1 53.1 81.0 63.6M92.9 41.7Q89.3 53.9 87.5 66.5M93.5 69.3Q95.1 60.7 93.9 52.0M84.4 50.2Q94.3 47.6 104.5 47.0M98.7 55.8Q98.2 46.4 92.0 39.2M93.6 68.5Q99.0 55.3 96.5 41.3M100.2 40.8Q102.5 52.2 96.1 61.9M104.7 66.3Q103.4 52.0 94.5 40.6M91.8 62.3Q95.9 47.9 107.2 38.2M96.8 73.7Q103.5 59.7 107.0 44.7M108.1 62.5Q103.4 51.3 97.9 40.5M85.8 52.5Q100.5 44.1 117.2 41.3M115.7 47.7Q105.1 49.7 94.5 47.9M91.9 44.7Q101.8 56.3 117.0 57.2M105.5 57.6Q106.0 49.6 107.1 41.6M96.4 47.0Q106.9 53.4 117.4 59.6M116.4 64.7Q106.6 55.0 98.3 43.9M101.8 18.9Q105.8 35.9 121.0 44.6M106.8 41.4Q108.4 50.9 115.6 57.3M113.4 36.4Q116.7 45.4 114.9 54.8M101.7 48.4Q114.4 48.0 126.7 44.4M115.8 30.5Q115.0 43.6 113.7 56.7M101.7 43.8Q116.6 47.1 130.1 54.2M121.6 71.6Q116.5 59.7 115.8 46.7M107.1 38.9Q115.7 30.4 127.6 28.4M122.4 40.2Q119.1 48.5 112.8 54.9M119.1 33.8Q114.7 47.6 119.8 61.1M117.5 51.8Q121.9 44.6 125.1 36.8M115.5 41.3Q123.9 44.5 132.0 48.3M122.9 52.0Q125.2 43.0 123.4 33.9M118.7 25.8Q124.3 41.4 127.8 57.5M138.7 51.0Q127.9 45.7 117.2 40.3M130.1 27.8Q120.8 41.3 121.7 57.6M120.4 40.4Q131.8 43.6 138.0 53.7M118.8 35.7Q125.8 44.8 136.9 48.1M120.7 35.6Q130.2 43.9 140.6 50.9M129.3 49.8Q134.2 41.4 131.4 32.0M144.6 38.4Q135.1 33.8 124.9 36.6M147.6 33.2Q137.0 39.7 124.7 41.8M139.4 67.8Q133.1 59.6 132.8 49.3M125.4 34.6Q140.1 38.9 147.9 52.2M130.7 51.4Q142.4 45.5 148.1 33.7M138.9 62.8Q141.5 47.5 134.9 33.5M143.6 56.9Q140.5 44.8 137.6 32.6M131.0 46.2Q141.9 52.5 149.0 63.0M146.9 50.5Q142.1 44.1 138.0 37.1M129.3 40.6Q144.5 40.8 155.6 51.3M155.0 48.7Q143.0 45.7 130.7 45.4M128.3 50.2Q143.9 43.5 160.2 48.1M156.6 46.5Q143.9 54.0 134.3 65.3M154.6 55.1Q154.0 39.4 144.2 27.1M161.7 38.2Q147.3 41.0 134.6 48.2M157.4 34.9Q151.8 47.8 139.9 55.4M140.2 50.9Q148.0 42.2 159.7 40.9M164.6 43.6Q152.4 36.8 138.4 37.4M163.6 53.1Q150.7 47.1 140.4 37.4M162.1 51.9Q156.7 45.1 151.0 38.4M154.4 36.2Q149.6 50.5 155.5 64.4M161.1 64.6Q155.6 56.2 152.9 46.6M153.7 52.5Q161.1 44.5 162.8 33.8M169.5 41.9Q160.7 44.6 152.5 48.8M146.4 62.4Q157.1 51.8 170.9 45.8M155.7 49.9Q160.4 37.7 170.9 29.9M150.5 44.8Q166.9 45.7 178.7 34.3M152.9 52.8Q163.2 47.3 174.2 43.0M175.9 36.6Q165.6 34.2 155.5 36.7M168.1 40.1Q160.9 51.7 164.4 64.8M172.7 35.8Q159.6 48.6 160.0 67.0M157.6 43.9Q169.0 43.9 176.8 52.2M180.0 40.6Q172.2 51.4 160.7 58.1M165.8 56.5Q171.2 45.3 178.7 35.3M177.8 58.9Q169.9 56.4 163.9 50.7M161.5 36.8Q173.6 47.8 185.4 59.0M164.7 39.9Q175.2 47.4 186.0 54.4M186.2 47.3Q176.0 49.7 165.5 51.1M165.4 52.2Q175.1 58.0 186.3 56.3M169.2 57.7Q177.4 51.2 185.8 44.8M190.0 54.7Q175.7 45.7 164.7 33.1M184.9 67.1Q182.7 52.8 177.6 39.3M197.8 42.9Q181.9 39.6 168.6 48.8M180.8 69.1Q185.3 57.0 187.2 44.2M169.3 53.8Q184.7 48.8 199.9 43.0M191.8 77.1Q183.3 67.7 178.2 56.3M185.6 27.7Q186.8 43.0 187.3 58.3M187.4 62.2Q186.7 51.2 189.9 40.6M175.9 45.7Q184.7 58.8 199.7 64.2M179.6 54.4Q189.6 49.2 200.2 53.0M193.5 36.7Q189.6 49.1 184.7 61.2M181.1 55.6Q190.3 63.0 199.8 70.0M198.1 48.0Q191.8 54.8 183.0 58.2M187.3 59.0Q191.8 50.7 200.8 47.8M190.8 49.3Q197.8 61.2 197.6 75.1M185.0 72.1Q201.2 64.3 206.9 47.3M204.7 64.5Q197.6 56.6 192.9 47.1M187.7 60.7Q197.2 52.3 209.9 53.1M201.6 70.5Q195.3 59.1 197.3 46.3M214.4 66.0Q199.7 72.7 184.4 67.4M215.3 55.2Q201.9 49.6 188.4 54.6M198.0 45.0Q200.7 59.3 208.0 72.0M211.2 67.5Q210.4 54.6 200.5 46.2M197.6 45.5Q204.5 58.4 216.1 67.5M212.9 71.7Q206.4 60.3 198.3 50.0M218.8 57.1Q207.9 63.0 195.6 61.3M203.7 50.7Q208.0 59.0 216.0 63.9M213.6 79.7Q212.3 65.3 204.3 53.3M210.1 39.4Q210.4 50.1 212.7 60.7M199.9 51.7Q210.7 55.9 222.3 57.1M202.6 56.9Q214.2 52.4 220.8 41.8M200.3 58.8Q214.2 60.2 227.8 57.2M223.1 37.6Q218.0 52.1 206.4 62.0M215.1 54.7Q221.6 67.0 220.1 80.9M207.0 53.2Q217.8 59.5 229.3 64.3M214.2 55.8Q218.8 63.9 227.6 67.4M233.7 50.4Q219.7 53.5 205.5 55.7M233.7 58.8Q222.9 63.6 211.1 62.6M227.0 47.2Q222.4 56.5 215.6 64.5M227.5 50.6Q223.9 60.3 217.1 68.2M222.6 81.0Q227.9 71.3 225.5 60.6M225.1 79.6Q225.0 69.2 226.1 59.0M219.3 67.5Q229.5 60.8 238.3 52.3M233.8 37.7Q223.6 48.2 224.4 62.8M228.7 50.7Q232.2 63.9 227.6 76.7M221.8 73.1Q231.1 62.8 241.8 53.9M230.1 56.8Q234.1 64.8 234.4 73.7M242.6 63.5Q231.6 61.4 220.4 62.4M243.4 69.2Q234.9 64.0 224.9 64.4M245.9 62.1Q235.5 68.6 225.5 75.7M237.1 47.4Q240.2 61.7 235.3 75.6M221.4 65.9Q237.0 70.7 251.1 62.4M232.8 68.2Q242.7 70.0 248.8 78.0M254.6 74.5Q238.3 71.6 221.9 74.6M241.3 75.7Q242.1 65.7 243.0 55.6M248.0 68.5Q246.8 58.7 239.2 52.3M232.1 77.6Q240.1 65.8 253.0 59.9M252.6 48.2Q244.3 62.9 236.9 78.0M256.7 50.0Q248.4 61.6 236.7 69.7M240.6 75.0Q248.1 68.1 255.6 61.2M240.6 71.6Q251.1 68.2 259.1 60.7M255.9 46.8Q252.8 62.4 239.7 71.5M255.3 54.3Q250.8 61.1 246.5 68.1M249.1 78.5Q248.2 68.3 253.2 59.3M252.7 64.6Q247.9 53.6 250.4 41.8M245.4 77.4Q253.9 73.1 262.4 68.7M253.1 86.8Q251.3 69.4 257.7 53.2M269.7 64.3Q256.1 65.2 242.5 65.7M257.1 61.8Q252.3 73.8 254.5 86.5M266.1 72.0Q258.7 63.2 248.0 58.9M251.5 65.4Q260.6 65.8 268.3 60.8M269.3 81.6Q262.3 67.5 250.1 57.6M262.1 77.1Q260.1 66.6 258.5 56.1M255.6 81.3Q264.7 81.9 273.7 83.8M267.7 84.6Q269.2 73.3 262.5 63.9M275.9 78.7Q263.8 67.5 252.2 55.9M270.1 82.2Q265.3 73.7 260.7 65.1M281.3 69.0Q267.1 66.4 252.8 68.4M254.7 62.5Q266.8 67.1 279.5 64.9M263.2 66.7Q272.4 79.3 274.4 94.8M285.0 79.3Q271.9 79.9 259.2 76.8M274.7 84.4Q274.8 68.8 271.3 53.6M275.3 78.7Q274.4 66.4 274.2 54.2M281.8 71.1Q273.5 73.8 265.6 77.6M283.0 75.4Q273.8 79.6 268.4 88.2M276.9 83.4Q277.3 73.6 274.6 64.1M263.6 76.9Q276.5 70.4 290.2 74.8M277.8 64.0Q277.4 74.4 276.0 84.7M285.9 69.1Q285.9 82.8 277.2 93.3M275.3 81.9Q282.5 72.5 285.8 61.2M268.0 75.2Q282.2 78.8 295.7 84.7M272.6 69.0Q285.0 70.0 293.7 78.8M281.7 70.7Q280.7 81.6 284.9 91.8M278.9 74.1Q288.7 82.6 295.0 94.0M280.5 57.3Q288.5 66.2 293.8 77.0M277.5 67.3Q288.6 68.6 296.8 76.3M304.2 78.4Q289.5 71.3 273.3 69.3M285.3 61.2Q287.3 75.3 298.8 83.6M293.9 67.7Q292.3 78.4 290.2 89.1M308.4 79.8Q296.3 68.4 279.8 67.1M309.6 79.9Q294.4 85.5 281.7 95.6M283.2 80.3Q292.0 68.1 304.3 59.5M287.1 69.9Q296.2 73.2 302.0 81.1M288.1 78.9Q297.2 77.4 305.6 73.7M305.7 91.0Q296.9 86.9 287.6 84.0M300.3 85.5Q295.3 74.6 296.3 62.7M289.6 68.9Q304.4 73.9 312.7 87.1M294.5 73.4Q302.7 80.4 312.7 84.3M315.1 78.3Q305.1 86.1 295.2 94.0M314.0 74.5Q305.8 66.0 294.0 65.3M303.4 85.1Q311.6 74.4 310.5 61.0M298.4 67.3Q306.1 76.5 313.8 85.7M319.3 62.8Q306.5 69.7 298.4 81.9M297.0 74.1Q310.9 75.2 323.1 81.9M304.8 80.1Q304.3 90.9 311.5 98.9M318.1 88.0Q313.1 75.1 305.2 63.6M322.2 83.4Q310.0 81.8 301.5 72.9M311.8 95.9Q309.1 84.4 311.4 72.9M307.9 89.5Q316.2 80.5 324.5 71.4M317.0 59.9Q311.5 69.8 310.1 81.1M306.7 59.4Q312.0 74.5 325.9 82.7M314.6 85.7Q321.6 76.9 325.7 66.5M330.3 81.5Q317.8 85.3 305.2 81.7M314.3 73.3Q320.0 83.7 327.7 92.7M307.8 69.4Q320.3 71.1 332.7 73.9M335.9 73.9Q323.4 79.6 309.6 79.4M331.4 66.8Q328.5 77.4 319.8 84.1M318.1 84.4Q324.2 77.2 330.2 70.0M330.5 93.2Q329.3 79.5 321.7 68.0M328.0 54.0Q330.1 62.9 327.1 71.6M319.3 74.0Q327.6 72.8 335.8 71.4M321.4 66.6Q330.2 65.4 339.1 65.1M324.3 81.4Q332.7 76.4 339.2 69.1M321.8 62.9Q331.4 67.1 337.8 75.4M347.8 80.7Q335.8 72.9 321.6 73.8M322.8 66.3Q333.2 67.0 343.7 66.3M346.3 76.0Q333.8 76.0 321.8 79.6M352.9 79.4Q337.7 71.4 321.4 76.6M330.9 63.0Q339.0 64.2 346.9 66.2M331.0 84.7Q337.7 77.6 347.1 74.8M347.4 85.9Q340.0 73.9 329.9 64.0M345.3 80.4Q341.3 73.1 335.3 67.4M353.3 60.1Q345.5 75.6 331.0 85.0M347.4 56.2Q350.1 70.1 342.0 81.7M349.5 67.3Q345.8 78.0 342.8 89.0M353.1 80.7Q343.9 73.8 335.2 66.3M358.4 67.7Q346.2 61.4 332.5 62.0M348.3 51.0Q350.6 64.7 347.9 78.4M360.5 72.2Q347.6 76.2 334.5 73.0M337.0 79.9Q351.6 73.2 362.7 61.6M345.3 77.0Q352.7 67.6 359.4 57.7M337.7 60.0Q355.0 60.9 368.1 72.3M337.8 67.8Q350.9 55.5 368.8 54.1M345.2 63.4Q359.5 58.0 366.3 44.4M357.3 58.0Q357.9 69.6 352.2 79.7M344.7 57.9Q359.0 65.8 369.1 78.8M353.2 66.5Q358.2 58.7 363.8 51.3M363.6 75.0Q362.6 62.9 356.1 52.6M357.6 87.9Q359.9 74.3 363.9 61.0M357.3 45.4Q359.1 58.5 366.9 69.1M372.9 70.8Q361.6 70.2 350.4 67.9M351.5 65.3Q364.6 69.0 378.1 70.2M379.1 54.4Q364.5 61.5 351.6 71.4M357.4 60.9Q365.6 68.0 373.6 75.3M365.9 79.4Q363.9 64.5 369.1 50.5M374.8 56.7Q367.5 65.3 366.5 76.5M367.5 83.8Q366.5 69.2 375.2 57.5M363.4 76.9Q371.0 70.3 379.3 64.5M364.8 47.9Q368.6 57.2 375.5 64.6M367.7 66.5Q374.6 70.0 382.1 67.8M369.8 55.6Q375.6 62.0 375.5 70.5M383.2 54.5Q373.9 54.4 365.7 49.9M385.1 66.0Q379.0 69.0 372.4 70.4M370.4 62.8Q378.8 61.3 385.7 56.2M384.0 68.4Q376.7 63.6 372.6 56.0M384.5 69.4Q378.6 70.4 372.7 70.8M387.4 62.6Q380.2 63.3 373.2 61.5" fill="none" stroke="#fff" stroke-width="1.200" stroke-linecap="round" opacity=".7"/><path d="M33.0 74.1Q26.3 69.5 23.9 61.7M25.5 67.2Q31.4 72.1 33.4 79.6M24.2 76.0Q29.7 75.6 34.8 73.4M24.8 69.1Q29.1 71.4 33.8 73.0M25.9 66.1Q34.5 65.7 40.8 71.7M25.8 76.3Q31.5 76.0 36.4 73.3M26.2 77.3Q34.8 72.5 37.9 63.2M30.1 71.2Q35.0 76.4 36.1 83.3M31.8 77.5Q35.2 69.7 39.7 62.3M33.7 76.9Q35.4 67.9 38.1 59.1M39.3 77.7Q36.7 69.5 37.1 60.8M41.4 61.3Q38.5 67.2 39.7 73.6M49.5 61.7Q41.7 61.1 34.1 63.1M38.7 76.6Q44.7 69.1 46.2 59.7M30.5 77.5Q43.2 74.3 55.7 70.4M55.0 66.2Q44.2 61.1 34.1 54.6M49.1 74.3Q42.8 68.0 42.6 59.2M54.0 61.6Q46.0 68.0 39.1 75.6M38.5 67.8Q49.0 66.6 57.8 72.3M42.8 52.3Q48.7 60.5 55.5 67.9M42.6 54.6Q47.1 66.8 58.2 73.6M53.9 50.3Q53.2 62.8 52.4 75.3M56.4 58.0Q50.1 68.1 50.3 80.1M57.9 43.0Q53.9 59.0 49.1 74.7M64.6 59.6Q53.9 58.9 43.7 55.6M53.9 73.0Q55.8 65.1 56.8 57.0M49.7 74.2Q57.6 66.4 60.0 55.5M62.6 48.1Q55.7 58.5 50.4 69.9M43.1 52.4Q59.9 45.6 76.8 52.1M67.2 62.6Q58.3 58.8 52.9 50.7M50.6 48.0Q63.1 58.2 71.7 71.8M52.1 68.4Q63.5 62.8 73.4 55.0M58.1 45.0Q62.6 59.1 70.7 71.4M59.7 66.4Q64.9 56.6 66.0 45.5M56.7 48.7Q68.0 59.3 76.3 72.4M82.5 53.3Q68.5 59.3 54.6 65.7M84.9 56.2Q69.8 65.1 53.1 60.0M79.2 50.0Q73.0 60.1 62.1 65.0M61.0 67.1Q72.2 64.4 82.0 58.5M60.7 62.7Q70.9 60.7 80.1 65.8M73.0 47.3Q69.9 56.9 74.2 66.2M60.9 60.0Q73.6 57.5 86.7 58.3M63.1 50.2Q74.2 53.6 84.6 58.8M78.1 52.6Q74.4 60.6 71.3 68.8M86.4 63.2Q81.3 52.2 70.3 47.1M83.1 43.0Q82.4 59.3 71.3 71.3M81.1 46.2Q82.3 56.5 76.7 65.3M76.6 59.4Q85.9 50.4 86.4 37.5M85.6 64.2Q77.4 56.7 76.3 45.7M81.5 42.8Q84.7 56.0 84.7 69.6M99.4 45.0Q84.6 46.3 72.3 54.6M73.5 56.5Q85.2 49.7 98.6 51.7M83.4 41.5Q88.9 52.2 88.4 64.1M99.1 64.9Q84.2 57.9 76.0 43.7M96.2 42.2Q85.1 53.6 82.6 69.3M78.5 47.9Q89.4 48.7 99.9 51.6M86.9 50.7Q91.7 38.8 94.6 26.2M99.2 38.7Q96.9 53.2 89.1 65.7M103.7 55.4Q92.6 45.8 81.3 36.6M84.9 57.3Q96.9 50.3 107.3 41.0M97.3 32.6Q92.4 42.9 94.9 54.0M109.4 43.5Q96.6 50.5 84.2 58.0M107.0 55.0Q94.4 49.9 86.2 39.2M93.6 58.5Q103.3 52.2 106.5 41.0M105.5 55.6Q100.0 47.7 91.5 43.1M92.9 35.0Q101.4 38.6 107.2 45.8M109.5 54.5Q102.9 48.1 94.7 44.1M112.0 27.7Q100.9 34.7 97.0 47.3M118.6 40.8Q102.9 40.0 87.5 37.1M94.0 53.8Q103.9 47.9 115.0 44.6M94.1 41.7Q104.3 50.8 118.0 50.0M105.8 54.2Q108.8 43.0 109.9 31.5M96.0 54.1Q112.7 52.1 122.6 38.4M112.0 39.9Q112.6 51.9 108.9 63.3M103.7 45.7Q112.9 50.7 123.1 47.9M112.2 54.1Q115.0 43.7 112.7 33.3M125.6 43.9Q113.7 40.9 103.2 47.0M114.0 48.9Q115.1 40.9 116.1 32.9M126.9 41.7Q115.5 41.2 106.6 48.3M102.7 30.8Q115.6 41.5 131.7 46.1M128.9 45.1Q117.3 40.6 106.1 35.1M122.5 27.8Q119.7 42.3 120.2 57.0M113.1 36.1Q121.6 39.5 130.6 42.0M133.5 51.3Q120.1 44.7 111.3 32.7M124.6 59.9Q123.7 43.8 118.8 28.4M138.8 39.8Q124.0 47.2 107.4 46.8M117.9 32.4Q124.3 44.7 130.6 57.1M142.6 51.9Q127.1 47.5 112.3 40.9M138.3 58.7Q126.0 51.1 120.9 37.6M137.7 45.7Q128.4 38.6 122.7 28.4M127.2 27.8Q129.3 38.7 136.3 47.2M141.9 45.0Q133.2 40.9 124.0 43.7M134.4 30.8Q127.8 41.9 131.1 54.5M147.2 51.3Q131.0 54.4 117.1 45.7M146.1 38.5Q135.8 39.5 125.9 42.3M144.6 51.9Q135.3 52.2 127.9 57.8M135.8 57.7Q137.3 48.8 137.4 39.6M150.1 42.4Q141.9 51.8 129.8 54.5M134.0 52.1Q138.8 41.2 146.4 32.1M139.6 55.7Q135.6 39.9 143.7 25.8M152.9 33.1Q144.7 44.8 132.1 51.5M153.3 27.2Q140.7 35.3 132.9 48.1M131.9 32.4Q144.1 41.0 155.2 50.9M149.6 48.7Q148.1 35.2 143.9 22.3M142.6 38.0Q144.8 46.6 145.9 55.3M158.0 37.9Q148.4 46.1 135.8 45.0M162.6 28.9Q148.4 34.7 136.4 44.2M160.8 51.0Q151.0 50.1 141.7 46.9M142.1 45.7Q150.9 49.6 160.0 46.4M168.0 44.1Q153.4 46.8 138.6 48.2M147.0 58.2Q151.6 48.6 155.6 38.7M160.7 26.6Q159.9 42.4 149.8 54.5M147.6 35.4Q155.0 44.8 161.6 54.9M163.3 41.7Q160.9 50.9 153.3 56.3M147.8 61.9Q154.0 51.2 164.5 44.4M166.1 62.5Q158.6 53.0 152.8 42.4M170.1 49.0Q162.4 55.9 152.0 55.4M168.0 49.1Q160.3 52.5 152.0 53.6M168.5 48.2Q163.4 37.9 153.1 32.8M165.2 69.5Q160.3 55.3 161.0 40.3M165.6 44.2Q159.6 55.2 160.1 67.8M172.8 55.5Q167.1 45.1 155.9 41.2M174.9 47.3Q166.2 53.2 155.6 52.8M161.0 64.2Q166.4 48.5 177.7 36.3M160.8 55.7Q172.6 45.0 179.3 30.5M161.4 46.8Q169.9 50.3 177.3 55.6M164.2 58.2Q170.7 45.8 181.0 36.5M183.7 57.5Q173.1 48.0 159.6 43.4M177.3 54.8Q168.9 43.4 167.4 29.3M185.6 60.0Q176.2 54.7 165.6 52.1M170.1 43.0Q180.4 45.6 185.7 54.7M181.3 66.6Q173.1 57.7 173.8 45.6M180.7 71.8Q178.6 57.9 175.6 44.2M188.6 59.4Q181.3 50.6 171.7 44.3M178.3 45.2Q180.2 59.9 182.6 74.5M166.2 59.0Q181.1 58.5 194.0 51.2M179.0 73.8Q178.4 56.0 189.9 42.3M176.0 71.7Q189.4 65.2 194.2 51.1M184.0 50.0Q188.6 57.2 190.1 65.6M191.2 41.1Q187.0 51.2 177.6 56.7M178.7 49.2Q189.5 55.6 196.9 65.7M174.4 43.1Q190.6 46.5 206.2 52.0M181.2 51.3Q189.4 41.5 201.7 38.1M206.5 55.4Q189.6 53.9 173.9 60.5M205.7 57.0Q191.2 59.5 177.9 53.3M191.6 39.1Q194.9 51.1 197.8 63.1M201.4 78.4Q192.0 64.8 184.5 50.2M182.6 68.1Q198.0 62.0 208.7 49.3M190.0 67.3Q201.2 55.0 207.0 39.4M196.5 45.8Q199.0 55.1 199.4 64.7M197.4 35.8Q198.4 44.9 203.2 52.6M183.6 65.9Q199.0 59.6 215.2 55.7M207.2 56.7Q199.5 50.2 194.4 41.4M189.3 58.4Q203.5 53.1 216.7 45.6M191.5 57.2Q201.5 60.4 211.9 60.5M212.0 64.8Q207.4 51.6 195.7 44.0M212.8 56.7Q206.6 65.1 202.8 74.9M220.8 71.4Q213.6 54.6 196.4 48.3M208.9 64.4Q209.7 51.7 208.7 39.0M219.4 51.7Q205.9 58.9 196.8 71.1M209.3 42.7Q212.5 59.3 213.9 76.1M221.0 62.0Q209.3 54.0 201.8 42.0M219.4 52.7Q209.3 64.7 205.2 79.9M230.5 60.7Q215.1 59.8 200.7 54.4M204.2 49.6Q208.8 65.8 223.2 74.5M222.4 86.6Q218.6 70.8 208.9 57.7M202.3 54.7Q215.8 57.3 228.4 62.8M232.6 63.8Q219.6 56.0 205.8 49.8M224.1 75.7Q214.3 62.4 214.6 45.8M202.8 73.6Q218.9 66.8 236.2 69.0M235.1 63.5Q225.3 72.8 211.9 74.8M227.8 92.2Q221.2 76.7 216.5 60.5M217.0 50.2Q226.3 53.7 231.0 62.4M243.0 49.4Q227.0 52.7 210.8 55.1M234.9 52.0Q225.5 56.5 216.9 62.3M242.7 51.8Q226.7 49.9 213.5 59.3M211.6 60.1Q228.2 62.3 243.5 69.0M225.9 58.3Q233.5 65.2 235.6 75.2M221.1 65.8Q232.5 62.4 240.8 53.7M244.7 54.7Q233.5 59.5 223.4 66.3M246.5 75.2Q233.8 65.3 220.1 56.8M234.5 59.7Q234.8 70.6 236.1 81.5M234.3 47.6Q229.7 61.8 235.5 75.6M233.0 60.3Q239.0 66.2 243.4 73.3M245.1 74.2Q236.0 60.9 228.4 46.8M236.9 79.0Q239.4 62.3 243.7 45.9M234.1 71.5Q241.8 76.7 248.8 82.9M247.0 50.1Q237.0 58.6 235.8 71.7M252.3 67.2Q242.0 76.0 232.4 85.7M243.6 49.0Q245.8 62.0 247.7 75.1M247.4 52.1Q244.6 66.2 244.7 80.5M239.8 66.6Q244.1 77.8 255.2 82.2M253.5 66.8Q247.5 75.2 237.7 78.7M263.2 57.2Q247.6 61.4 235.1 71.8M261.0 74.9Q252.1 81.7 241.0 82.8M241.2 68.3Q251.9 73.5 263.8 74.2M246.8 52.6Q251.0 61.8 259.5 67.6M236.3 75.7Q252.2 71.1 268.3 75.0M254.5 55.4Q255.2 64.5 257.3 73.5M269.5 65.9Q253.8 61.2 237.3 60.5M254.5 80.4Q260.7 65.4 260.9 49.1M245.1 67.5Q256.4 70.8 268.1 71.1M244.8 62.6Q258.0 61.7 271.1 62.9M271.2 60.4Q259.0 64.1 252.7 75.2M250.3 62.5Q260.9 72.1 275.2 71.7M269.0 66.6Q262.1 72.3 253.2 73.5M273.3 76.2Q261.5 75.2 249.6 75.1M265.8 68.0Q267.2 77.0 266.1 86.1M272.1 88.4Q270.1 71.1 259.5 57.3M255.7 80.4Q266.3 76.4 277.6 75.0M276.8 58.8Q271.7 72.7 260.2 82.2M253.2 78.4Q267.2 70.7 283.1 72.1M272.2 95.1Q269.2 82.0 264.4 69.5M259.7 61.4Q271.8 63.2 283.8 65.5M288.2 78.5Q273.3 85.3 257.0 83.9M258.4 80.1Q268.8 67.3 285.1 65.6M282.8 76.8Q274.0 81.7 268.5 90.1M289.4 72.9Q277.7 70.2 265.7 72.0M291.1 87.2Q280.2 73.7 263.3 69.7M274.8 87.2Q275.4 74.6 284.9 66.1M264.9 69.0Q274.3 84.3 291.2 90.2M292.8 77.7Q279.2 73.1 266.6 66.1M279.3 87.0Q276.7 75.0 282.6 64.3M293.4 76.2Q285.2 69.4 275.3 65.2M271.9 64.7Q277.6 81.2 293.4 88.5M277.8 67.3Q282.9 79.5 294.5 85.7M287.3 90.1Q284.2 79.7 286.0 69.0M296.3 75.2Q286.9 71.4 276.9 72.5M286.2 64.1Q285.3 75.4 290.8 85.2M282.8 90.0Q294.4 77.9 298.5 61.6M286.0 83.8Q292.4 76.2 297.2 67.4M287.5 76.3Q289.4 85.8 297.1 91.9M303.8 86.2Q291.7 79.9 279.0 75.0M306.2 85.3Q294.4 81.5 285.7 72.7M293.5 84.7Q292.2 73.7 297.4 64.0M298.1 87.4Q291.5 78.3 293.6 67.3M307.5 74.3Q299.1 79.2 289.7 81.7M299.4 82.0Q301.5 70.4 299.2 58.9M299.5 90.5Q302.6 79.4 297.7 69.0M298.4 87.0Q297.2 71.9 300.6 57.2M297.8 56.4Q298.2 73.0 309.3 85.3M318.2 76.2Q302.4 74.2 286.5 75.4M311.4 53.2Q300.7 66.5 296.8 83.0M299.6 89.6Q305.4 82.6 312.3 76.5M291.0 60.1Q303.8 71.9 320.8 76.2M310.0 56.7Q313.8 69.8 308.7 82.4M305.1 68.7Q304.2 83.4 314.0 94.3M322.7 84.1Q311.6 72.1 295.4 69.3M310.6 92.0Q312.3 78.4 308.8 65.2M322.5 77.7Q313.6 68.5 300.8 67.5M313.6 78.2Q316.5 70.3 318.0 62.1M301.1 63.5Q314.4 73.5 329.3 80.9M304.0 89.9Q316.6 79.0 326.8 65.9M305.9 65.4Q316.5 76.8 332.0 77.4M315.1 82.7Q319.3 75.5 323.8 68.6M309.3 73.9Q323.4 73.1 334.1 63.7M310.6 91.1Q323.2 80.3 333.1 66.9M325.0 79.7Q326.7 67.9 321.8 57.0M334.9 65.2Q324.3 75.8 312.6 85.4M332.6 80.6Q325.8 70.6 317.3 62.1M311.4 77.5Q324.1 73.7 337.4 72.6M311.8 77.9Q327.0 80.1 342.4 79.0M316.2 67.5Q327.5 66.8 336.9 73.2M326.6 50.5Q326.6 67.5 334.5 82.6M312.8 73.5Q329.0 69.0 344.9 63.6M335.5 58.2Q331.5 74.7 330.0 91.7M328.5 64.0Q327.6 73.9 334.0 81.6M341.9 46.3Q336.1 61.3 326.2 73.9M326.8 85.2Q333.4 78.8 339.8 72.3M344.9 58.0Q335.7 69.3 324.0 77.9M337.0 83.3Q338.4 67.5 337.2 51.6M349.1 64.4Q341.5 77.4 328.6 85.2M333.6 75.1Q337.8 85.2 347.4 90.5M350.7 71.5Q339.9 70.8 329.3 68.4M333.4 65.4Q341.5 73.9 350.9 81.0M336.7 64.1Q343.7 70.7 351.6 76.2M342.9 71.9Q341.3 63.7 340.4 55.4M342.1 52.3Q348.2 66.0 345.5 80.8M338.4 85.9Q349.5 73.4 352.4 57.0M339.5 53.8Q345.9 67.5 350.8 81.7M330.3 71.6Q347.4 73.1 363.2 79.8M358.9 61.4Q350.0 59.0 340.9 60.1M351.4 83.8Q344.4 71.3 345.7 57.1M341.2 72.8Q350.4 67.5 360.5 64.0M358.3 75.6Q356.3 64.7 351.3 54.7M368.8 66.3Q353.8 63.4 340.3 70.7M348.1 56.0Q354.7 71.8 365.1 85.5M350.5 78.6Q358.0 68.2 366.7 58.7M352.8 70.8Q359.0 64.5 364.6 57.5M344.8 69.9Q359.5 69.6 372.6 76.3M362.1 82.4Q354.7 70.1 358.3 56.2M353.1 58.4Q363.6 61.7 368.6 71.4M351.2 58.8Q361.4 68.8 374.1 75.4M355.5 81.4Q371.0 71.5 374.6 53.6M378.9 53.6Q365.8 64.3 349.3 67.8M375.6 72.9Q367.6 76.0 359.9 72.5M359.1 62.4Q367.3 64.5 375.7 64.8M358.5 81.9Q369.0 76.4 378.3 69.1M366.6 55.1Q364.9 64.1 368.4 72.5M362.3 58.9Q366.5 73.1 379.6 79.9M369.3 76.3Q371.9 62.8 370.1 49.2M372.1 77.6Q374.9 64.4 371.4 51.4M362.9 66.2Q370.6 73.4 381.0 75.1M371.3 52.1Q376.1 58.8 379.3 66.4M383.8 59.5Q375.0 61.3 366.8 65.0M375.8 51.8Q374.1 62.1 375.0 72.4M379.6 66.2Q380.5 56.1 375.1 47.4M386.5 69.4Q377.7 71.4 368.9 69.8M377.7 61.1Q378.9 66.9 383.5 70.4M375.3 66.1Q380.3 58.6 387.3 52.9" fill="none" stroke="#fff" stroke-width=".9" stroke-linecap="round" opacity=".9"/></svg>
<div class="abs" style="left:0;top:706px;width:443px;height:1px;background:#434343"></div>
<svg style="left:392px;top:715px" width="14" height="14" viewBox="0 0 14 14"><rect x=".7" y=".7" width="12.600" height="12.600" fill="none" stroke="#d8d8d8" stroke-width="1.200"/><path d="M7 3.800v6.400M3.800 7h6.400" stroke="#d8d8d8" stroke-width="1.200"/></svg>
<div class="abs" style="left:0;top:738px;width:443px;height:2px;background:#3e3e3e"></div>
<div class="abs" style="left:0;top:740px;width:443px;height:9px;background:#4f4f4f"></div>
<div class="abs" style="left:209px;top:741px;width:25px;height:5px;background:repeating-linear-gradient(90deg,#454545 0 1px,#595959 1px 3px)"></div>
</div>
<!-- OVERLAYS: annotations, IME bar, watermark -->
<svg style="left:0;top:0;pointer-events:none" width="1920" height="1027" viewBox="0 0 1920 1027">
  <!-- arrow 1 to brush settings button -->
  <polygon points="192.600,315.400 214.300,79 211.800,75.400 222.300,62.300 228.200,74.800 225.300,79" fill="#ff2b1c"/>
  <!-- arrow 2 to brush 112 -->
  <polygon points="1311.400,221 1240.800,295.600 1237.200,292.800 1234.500,310.700 1252.600,305.100 1249.300,303" fill="#ff2b1c"/>
  <!-- red boxes -->
  <rect x="887" y="194.300" width="75.400" height="38.600" rx="5" fill="none" stroke="#f5281a" stroke-width="4.300"/>
  <rect x="893.600" y="313.900" width="30.200" height="60.400" rx="4.500" fill="none" stroke="#f5281a" stroke-width="4.200"/>
</svg>
<!-- Sogou IME bar -->
<div id="ime" class="abs" style="left:1574px;top:854px;width:227px;height:29px;background:#fff"></div>
<div class="abs" style="left:1548px;top:852px;width:30px;height:30px;background:#f2601d;border-radius:4px;transform:rotate(-13deg)"></div>
<span class="t" style="left:1552px;top:848px;font-size:35px;font-weight:bold;font-style:italic;color:#fff;transform:rotate(-13deg) scaleX(1.100);font-family:'Liberation Sans',sans-serif">S</span>
<span class="t" style="left:1587.500px;top:860px;font-size:18px;font-weight:900;color:#1f6fc6">中</span>
<svg style="left:1616px;top:860px" width="18" height="20" viewBox="0 0 18 20"><circle cx="3.300" cy="5" r="2.100" fill="none" stroke="#1f6fc6" stroke-width="1.500"/><path d="M11.500 9.500a2.300 2.300 0 1 1 2.300 2.300c0 2.200-1 3.600-3 4.400 1-.9 1.600-2 1.600-3.200-.6-.4-.9-1-.9-1.800z" fill="#1f6fc6" transform="translate(0 -1)"/></svg>
<svg style="left:1640px;top:859px" width="21" height="21" viewBox="0 0 21 21"><circle cx="10.500" cy="10.500" r="9.200" fill="none" stroke="#1f6fc6" stroke-width="1.900"/><circle cx="7.300" cy="8" r="1.300" fill="#1f6fc6"/><circle cx="13.700" cy="8" r="1.300" fill="#1f6fc6"/><path d="M6 12.300c1 2 2.600 3 4.500 3s3.500-1 4.500-3" fill="none" stroke="#1f6fc6" stroke-width="1.600"/></svg>
<svg style="left:1670px;top:859px" width="16" height="21" viewBox="0 0 16 21"><rect x="4.600" y=".5" width="6.800" height="12.500" rx="3.400" fill="#1f6fc6"/><path d="M1.300 9.500c0 4 2.800 6.400 6.700 6.400s6.700-2.400 6.700-6.400" fill="none" stroke="#1f6fc6" stroke-width="1.800"/><path d="M8 16v3.500M4 20h8" stroke="#1f6fc6" stroke-width="1.800"/></svg>
<svg style="left:1695px;top:862px" width="21" height="15" viewBox="0 0 21 15"><rect width="21" height="15" rx="1.800" fill="#1f6fc6"/><g fill="#fff"><rect x="2.200" y="2.500" width="2" height="2"/><rect x="5.700" y="2.500" width="2" height="2"/><rect x="9.200" y="2.500" width="2" height="2"/><rect x="12.700" y="2.500" width="2" height="2"/><rect x="16.200" y="2.500" width="2.500" height="2"/><rect x="2.200" y="6.300" width="2.600" height="2"/><rect x="6.400" y="6.300" width="2" height="2"/><rect x="9.900" y="6.300" width="2" height="2"/><rect x="13.400" y="6.300" width="2" height="2"/><rect x="16.800" y="6.300" width="2" height="2"/><rect x="4.200" y="10.400" width="12.500" height="2"/></g></svg>
<svg style="left:1723px;top:860px" width="22" height="19" viewBox="0 0 22 19"><circle cx="8.500" cy="4" r="3.400" fill="#c3c8d4"/><path d="M1 15.500c0-4.500 3-7 7.500-7 3 0 5 1 6.200 3v5.500H1z" fill="#c3c8d4"/><path d="M0 11.500l3.500-2.500v5z" fill="#c3c8d4"/><rect x="8.500" y="9.500" width="13" height="9" rx="1" fill="#fff" stroke="#c3c8d4" stroke-width="1"/><text x="9.700" y="17.300" font-family="Liberation Sans, sans-serif" font-weight="bold" font-style="italic" font-size="8.500" fill="#b9bfcc">17</text></svg>
<svg style="left:1750px;top:861px" width="19" height="18" viewBox="0 0 19 18"><path d="M6.200.3c.8 1.300 1.900 1.900 3.300 1.900S12 1.600 12.800.3L18.700 3l-1.800 5-2.400-.8V17.500h-10V7.200L2.100 8 .3 3z" fill="#1f6fc6"/></svg>
<svg style="left:1778px;top:861px" width="18" height="17" viewBox="0 0 18 17"><rect x="0" y="0" width="8" height="7.600" rx="1" fill="#1f6fc6"/><rect x="10.600" y=".8" width="6.400" height="6" rx="1" fill="none" stroke="#1f6fc6" stroke-width="1.600"/><rect x="0" y="9.400" width="8" height="7.600" rx="1" fill="#1f6fc6"/><rect x="9.800" y="9.400" width="8" height="7.600" rx="1" fill="#1f6fc6"/></svg>
<!-- watermark -->
<div id="wm" class="abs" style="left:0;top:0;width:1920px;height:1027px;color:#fff;text-shadow:2px 2px 0 #1a1a1a,1px 1px 0 #1a1a1a,3px 3px 1px rgba(20,20,20,.75);font-family:'Liberation Sans','Noto Sans CJK SC',sans-serif">
  <span class="t" id="wm1" style="left:1448px;top:942px;font-size:48px;line-height:56px;font-weight:900">头条</span>
  <span class="t" id="wm2" style="left:1558px;top:940px;font-size:50px;line-height:58px;font-weight:400;letter-spacing:-1.200px"><span style="letter-spacing:0;visibility:hidden">@</span>知识分享</span>
  <span class="t" id="wm0" style="left:1555.500px;top:936px;font-size:54px;line-height:62px;font-weight:400">@</span>
  <span class="t" id="wm3" style="left:1801px;top:938px;font-family:'NanumGothic','Liberation Sans',sans-serif;font-size:53px;line-height:66px;font-weight:400;letter-spacing:-4.600px;transform:scaleX(1.120);transform-origin:0 0">991</span>
</div>
</div>
</body>
</html>
